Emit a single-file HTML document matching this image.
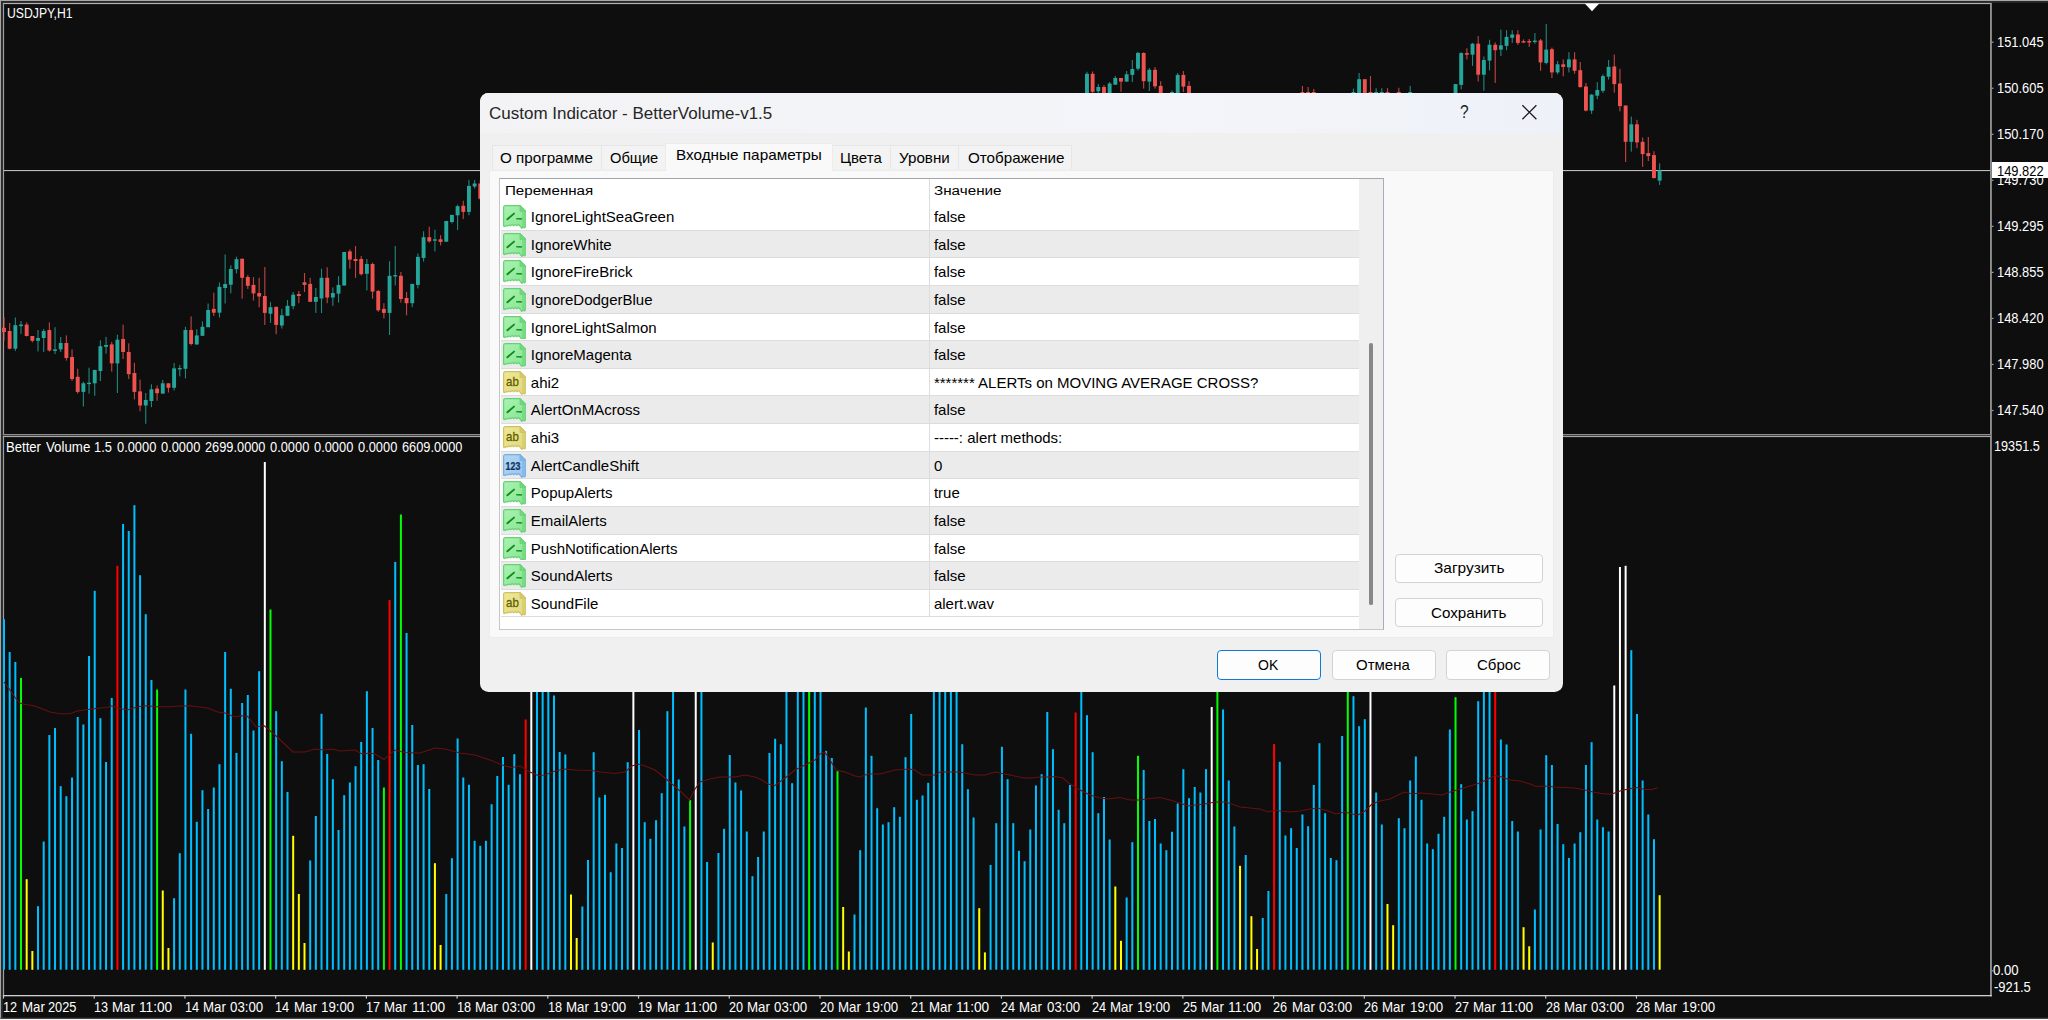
<!DOCTYPE html><html><head><meta charset="utf-8"><title>USDJPY,H1</title><style>
html,body{margin:0;padding:0}
body{width:2048px;height:1020px;overflow:hidden;position:relative;background:#0e0e0e;font-family:"Liberation Sans",sans-serif}
.t{position:absolute;white-space:pre;transform-origin:0 0}
#chart{position:absolute;left:0;top:0}
#dlg{position:absolute;left:480px;top:92.7px;width:1082.7px;height:599px;background:#f0f0f0;border-radius:8.5px;overflow:hidden}
#dlg .a{position:absolute}
.tab{position:absolute;top:52.8px;height:24px;background:#f3f3f3;border:1px solid #e6e6e6;border-bottom:none;box-sizing:border-box}
.btn{position:absolute;box-sizing:border-box;background:#fdfdfd;border:1px solid #d3d3d3;border-radius:4px}
.row{position:absolute;left:21px;width:857.5px;height:27.63px;box-sizing:border-box;border-bottom:1px solid #dcdcdc}

</style></head><body>
<svg id="chart" width="2048" height="1020" viewBox="0 0 2048 1020">
<rect x="0" y="0" width="2048" height="1" fill="#a8a8a8"/>
<rect x="0" y="1" width="2048" height="1.8" fill="#2b2b2b"/>
<rect x="0" y="0" width="1" height="1019" fill="#a4a4a4"/>
<rect x="1" y="1" width="1.8" height="1017" fill="#2b2b2b"/>
<rect x="0" y="1018.8" width="2048" height="1.2" fill="#f4f4f4"/>
<rect x="0" y="1017.8" width="2048" height="1" fill="#4a4a4a"/>
<rect x="2.9" y="2.9" width="1988.6" height="1.2" fill="#b4b4b4"/>
<rect x="2.9" y="2.9" width="1.2" height="993.4" fill="#a0a0a0"/>
<rect x="1990" y="2.9" width="1.9" height="993.4" fill="#8e8e8e"/>
<rect x="2.9" y="995" width="1989" height="1.3" fill="#d0d0d0"/>
<rect x="2.9" y="434" width="1988" height="1.1" fill="#8e8e8e"/>
<rect x="2.9" y="435.1" width="1988" height="0.9" fill="#484848"/>
<rect x="2.9" y="436" width="1988" height="1.1" fill="#a8a8a8"/>
<rect x="4" y="170" width="1986" height="1.1" fill="#bcbcbc"/>
<path d="M1584.8 3.5 L1599.2 3.5 L1592 11.2 Z" fill="#fff"/>
<rect x="1991.5" y="41.60" width="2" height="1.2" fill="#a0a0a0"/>
<rect x="1991.5" y="87.64" width="2" height="1.2" fill="#a0a0a0"/>
<rect x="1991.5" y="133.68" width="2" height="1.2" fill="#a0a0a0"/>
<rect x="1991.5" y="179.72" width="2" height="1.2" fill="#a0a0a0"/>
<rect x="1991.5" y="225.76" width="2" height="1.2" fill="#a0a0a0"/>
<rect x="1991.5" y="271.80" width="2" height="1.2" fill="#a0a0a0"/>
<rect x="1991.5" y="317.84" width="2" height="1.2" fill="#a0a0a0"/>
<rect x="1991.5" y="363.88" width="2" height="1.2" fill="#a0a0a0"/>
<rect x="1991.5" y="409.92" width="2" height="1.2" fill="#a0a0a0"/>
<rect x="1991.5" y="970.20" width="1.6" height="1.2" fill="#a0a0a0"/>
<rect x="2.90" y="996" width="1.2" height="2.6" fill="#c8c8c8"/>
<rect x="93.62" y="996" width="1.2" height="2.6" fill="#c8c8c8"/>
<rect x="184.34" y="996" width="1.2" height="2.6" fill="#c8c8c8"/>
<rect x="275.06" y="996" width="1.2" height="2.6" fill="#c8c8c8"/>
<rect x="365.78" y="996" width="1.2" height="2.6" fill="#c8c8c8"/>
<rect x="456.50" y="996" width="1.2" height="2.6" fill="#c8c8c8"/>
<rect x="547.22" y="996" width="1.2" height="2.6" fill="#c8c8c8"/>
<rect x="637.94" y="996" width="1.2" height="2.6" fill="#c8c8c8"/>
<rect x="728.66" y="996" width="1.2" height="2.6" fill="#c8c8c8"/>
<rect x="819.38" y="996" width="1.2" height="2.6" fill="#c8c8c8"/>
<rect x="910.10" y="996" width="1.2" height="2.6" fill="#c8c8c8"/>
<rect x="1000.82" y="996" width="1.2" height="2.6" fill="#c8c8c8"/>
<rect x="1091.54" y="996" width="1.2" height="2.6" fill="#c8c8c8"/>
<rect x="1182.26" y="996" width="1.2" height="2.6" fill="#c8c8c8"/>
<rect x="1272.98" y="996" width="1.2" height="2.6" fill="#c8c8c8"/>
<rect x="1363.70" y="996" width="1.2" height="2.6" fill="#c8c8c8"/>
<rect x="1454.42" y="996" width="1.2" height="2.6" fill="#c8c8c8"/>
<rect x="1545.14" y="996" width="1.2" height="2.6" fill="#c8c8c8"/>
<rect x="1635.86" y="996" width="1.2" height="2.6" fill="#c8c8c8"/>
<g>
<rect x="3.45" y="317.0" width="1.1" height="23.8" fill="#ef5350" opacity=".8"/>
<rect x="2.05" y="327.8" width="3.9" height="4.2" fill="#ef5350"/>
<rect x="9.12" y="323.0" width="1.1" height="26.4" fill="#ef5350" opacity=".8"/>
<rect x="7.72" y="331.0" width="3.9" height="17.7" fill="#ef5350"/>
<rect x="14.79" y="317.5" width="1.1" height="33.5" fill="#26a69a" opacity=".8"/>
<rect x="13.39" y="325.2" width="3.9" height="23.5" fill="#26a69a"/>
<rect x="20.46" y="321.0" width="1.1" height="12.9" fill="#26a69a" opacity=".8"/>
<rect x="19.06" y="324.6" width="3.9" height="1.5" fill="#26a69a"/>
<rect x="26.13" y="322.4" width="1.1" height="14.1" fill="#ef5350" opacity=".8"/>
<rect x="24.73" y="324.6" width="3.9" height="11.4" fill="#ef5350"/>
<rect x="31.80" y="336.0" width="1.1" height="6.3" fill="#ef5350" opacity=".8"/>
<rect x="30.40" y="336.0" width="3.9" height="4.8" fill="#ef5350"/>
<rect x="37.47" y="330.0" width="1.1" height="21.5" fill="#26a69a" opacity=".8"/>
<rect x="36.07" y="338.0" width="3.9" height="2.8" fill="#26a69a"/>
<rect x="43.14" y="329.0" width="1.1" height="23.0" fill="#26a69a" opacity=".8"/>
<rect x="41.74" y="331.0" width="3.9" height="7.0" fill="#26a69a"/>
<rect x="48.81" y="322.4" width="1.1" height="29.1" fill="#ef5350" opacity=".8"/>
<rect x="47.41" y="330.0" width="3.9" height="20.5" fill="#ef5350"/>
<rect x="54.48" y="327.2" width="1.1" height="26.8" fill="#26a69a" opacity=".8"/>
<rect x="53.08" y="349.4" width="3.9" height="1.5" fill="#26a69a"/>
<rect x="60.15" y="336.9" width="1.1" height="15.1" fill="#26a69a" opacity=".8"/>
<rect x="58.75" y="343.0" width="3.9" height="6.4" fill="#26a69a"/>
<rect x="65.82" y="335.4" width="1.1" height="25.2" fill="#ef5350" opacity=".8"/>
<rect x="64.42" y="343.0" width="3.9" height="15.0" fill="#ef5350"/>
<rect x="71.49" y="349.4" width="1.1" height="31.6" fill="#ef5350" opacity=".8"/>
<rect x="70.09" y="357.0" width="3.9" height="22.0" fill="#ef5350"/>
<rect x="77.16" y="368.8" width="1.1" height="24.8" fill="#ef5350" opacity=".8"/>
<rect x="75.76" y="376.8" width="3.9" height="15.1" fill="#ef5350"/>
<rect x="82.83" y="381.7" width="1.1" height="24.8" fill="#26a69a" opacity=".8"/>
<rect x="81.43" y="383.3" width="3.9" height="8.6" fill="#26a69a"/>
<rect x="88.50" y="367.7" width="1.1" height="25.9" fill="#26a69a" opacity=".8"/>
<rect x="87.10" y="382.7" width="3.9" height="1.4" fill="#26a69a"/>
<rect x="94.17" y="369.9" width="1.1" height="25.9" fill="#26a69a" opacity=".8"/>
<rect x="92.77" y="369.9" width="3.9" height="13.4" fill="#26a69a"/>
<rect x="99.84" y="340.3" width="1.1" height="40.7" fill="#26a69a" opacity=".8"/>
<rect x="98.44" y="346.2" width="3.9" height="24.8" fill="#26a69a"/>
<rect x="105.51" y="336.9" width="1.1" height="16.8" fill="#26a69a" opacity=".8"/>
<rect x="104.11" y="345.0" width="3.9" height="1.8" fill="#26a69a"/>
<rect x="111.18" y="341.8" width="1.1" height="29.8" fill="#ef5350" opacity=".8"/>
<rect x="109.78" y="344.4" width="3.9" height="19.0" fill="#ef5350"/>
<rect x="116.85" y="334.7" width="1.1" height="58.3" fill="#26a69a" opacity=".8"/>
<rect x="115.45" y="339.7" width="3.9" height="23.7" fill="#26a69a"/>
<rect x="122.52" y="324.6" width="1.1" height="34.4" fill="#ef5350" opacity=".8"/>
<rect x="121.12" y="339.0" width="3.9" height="13.0" fill="#ef5350"/>
<rect x="128.19" y="343.4" width="1.1" height="35.6" fill="#ef5350" opacity=".8"/>
<rect x="126.79" y="352.0" width="3.9" height="22.2" fill="#ef5350"/>
<rect x="133.86" y="362.8" width="1.1" height="36.6" fill="#ef5350" opacity=".8"/>
<rect x="132.46" y="373.0" width="3.9" height="18.9" fill="#ef5350"/>
<rect x="139.53" y="379.6" width="1.1" height="31.7" fill="#ef5350" opacity=".8"/>
<rect x="138.13" y="391.4" width="3.9" height="14.1" fill="#ef5350"/>
<rect x="145.20" y="393.0" width="1.1" height="30.8" fill="#26a69a" opacity=".8"/>
<rect x="143.80" y="400.0" width="3.9" height="5.5" fill="#26a69a"/>
<rect x="150.87" y="384.3" width="1.1" height="22.9" fill="#26a69a" opacity=".8"/>
<rect x="149.47" y="389.3" width="3.9" height="11.7" fill="#26a69a"/>
<rect x="156.54" y="385.4" width="1.1" height="15.3" fill="#ef5350" opacity=".8"/>
<rect x="155.14" y="388.6" width="3.9" height="4.6" fill="#ef5350"/>
<rect x="162.21" y="380.0" width="1.1" height="13.6" fill="#26a69a" opacity=".8"/>
<rect x="160.81" y="383.3" width="3.9" height="10.3" fill="#26a69a"/>
<rect x="167.88" y="383.3" width="1.1" height="9.2" fill="#ef5350" opacity=".8"/>
<rect x="166.48" y="383.3" width="3.9" height="4.5" fill="#ef5350"/>
<rect x="173.55" y="363.0" width="1.1" height="27.4" fill="#26a69a" opacity=".8"/>
<rect x="172.15" y="368.4" width="3.9" height="19.4" fill="#26a69a"/>
<rect x="179.22" y="365.0" width="1.1" height="11.4" fill="#26a69a" opacity=".8"/>
<rect x="177.82" y="368.0" width="3.9" height="1.4" fill="#26a69a"/>
<rect x="184.89" y="326.8" width="1.1" height="51.7" fill="#26a69a" opacity=".8"/>
<rect x="183.49" y="330.0" width="3.9" height="38.8" fill="#26a69a"/>
<rect x="190.56" y="316.4" width="1.1" height="29.1" fill="#ef5350" opacity=".8"/>
<rect x="189.16" y="330.0" width="3.9" height="14.0" fill="#ef5350"/>
<rect x="196.23" y="329.3" width="1.1" height="15.7" fill="#26a69a" opacity=".8"/>
<rect x="194.83" y="335.4" width="3.9" height="9.0" fill="#26a69a"/>
<rect x="201.90" y="321.4" width="1.1" height="14.4" fill="#26a69a" opacity=".8"/>
<rect x="200.50" y="326.8" width="3.9" height="9.0" fill="#26a69a"/>
<rect x="207.57" y="303.5" width="1.1" height="23.7" fill="#26a69a" opacity=".8"/>
<rect x="206.17" y="310.0" width="3.9" height="17.2" fill="#26a69a"/>
<rect x="213.24" y="292.7" width="1.1" height="23.3" fill="#ef5350" opacity=".8"/>
<rect x="211.84" y="308.9" width="3.9" height="3.8" fill="#ef5350"/>
<rect x="218.91" y="282.5" width="1.1" height="35.0" fill="#26a69a" opacity=".8"/>
<rect x="217.51" y="286.9" width="3.9" height="25.8" fill="#26a69a"/>
<rect x="224.58" y="254.5" width="1.1" height="49.0" fill="#26a69a" opacity=".8"/>
<rect x="223.18" y="284.0" width="3.9" height="4.0" fill="#26a69a"/>
<rect x="230.25" y="265.3" width="1.1" height="28.0" fill="#26a69a" opacity=".8"/>
<rect x="228.85" y="269.0" width="3.9" height="15.7" fill="#26a69a"/>
<rect x="235.92" y="256.7" width="1.1" height="16.8" fill="#26a69a" opacity=".8"/>
<rect x="234.52" y="259.2" width="3.9" height="10.0" fill="#26a69a"/>
<rect x="241.59" y="258.4" width="1.1" height="40.3" fill="#ef5350" opacity=".8"/>
<rect x="240.19" y="258.8" width="3.9" height="19.0" fill="#ef5350"/>
<rect x="247.26" y="275.0" width="1.1" height="14.0" fill="#ef5350" opacity=".8"/>
<rect x="245.86" y="277.0" width="3.9" height="8.8" fill="#ef5350"/>
<rect x="252.93" y="277.2" width="1.1" height="23.3" fill="#ef5350" opacity=".8"/>
<rect x="251.53" y="284.9" width="3.9" height="8.5" fill="#ef5350"/>
<rect x="258.60" y="277.8" width="1.1" height="29.4" fill="#ef5350" opacity=".8"/>
<rect x="257.20" y="293.0" width="3.9" height="3.5" fill="#ef5350"/>
<rect x="264.27" y="267.0" width="1.1" height="58.0" fill="#ef5350" opacity=".8"/>
<rect x="262.87" y="296.0" width="3.9" height="16.9" fill="#ef5350"/>
<rect x="269.94" y="302.2" width="1.1" height="20.7" fill="#26a69a" opacity=".8"/>
<rect x="268.54" y="307.2" width="3.9" height="6.5" fill="#26a69a"/>
<rect x="275.61" y="306.8" width="1.1" height="27.4" fill="#ef5350" opacity=".8"/>
<rect x="274.21" y="306.8" width="3.9" height="18.1" fill="#ef5350"/>
<rect x="281.28" y="308.7" width="1.1" height="19.8" fill="#26a69a" opacity=".8"/>
<rect x="279.88" y="315.3" width="3.9" height="10.2" fill="#26a69a"/>
<rect x="286.95" y="300.0" width="1.1" height="15.8" fill="#26a69a" opacity=".8"/>
<rect x="285.55" y="305.8" width="3.9" height="10.0" fill="#26a69a"/>
<rect x="292.62" y="292.0" width="1.1" height="17.3" fill="#26a69a" opacity=".8"/>
<rect x="291.22" y="294.7" width="3.9" height="11.5" fill="#26a69a"/>
<rect x="298.29" y="291.0" width="1.1" height="12.2" fill="#ef5350" opacity=".8"/>
<rect x="296.89" y="294.0" width="3.9" height="2.0" fill="#ef5350"/>
<rect x="303.96" y="273.0" width="1.1" height="19.0" fill="#ef5350" opacity=".8"/>
<rect x="302.56" y="282.3" width="3.9" height="2.6" fill="#ef5350"/>
<rect x="309.63" y="277.8" width="1.1" height="24.0" fill="#ef5350" opacity=".8"/>
<rect x="308.23" y="283.9" width="3.9" height="17.9" fill="#ef5350"/>
<rect x="315.30" y="288.0" width="1.1" height="25.0" fill="#26a69a" opacity=".8"/>
<rect x="313.90" y="297.0" width="3.9" height="4.8" fill="#26a69a"/>
<rect x="320.97" y="268.7" width="1.1" height="44.3" fill="#26a69a" opacity=".8"/>
<rect x="319.57" y="277.8" width="3.9" height="20.7" fill="#26a69a"/>
<rect x="326.64" y="267.3" width="1.1" height="35.9" fill="#ef5350" opacity=".8"/>
<rect x="325.24" y="277.8" width="3.9" height="19.7" fill="#ef5350"/>
<rect x="332.31" y="287.4" width="1.1" height="18.4" fill="#26a69a" opacity=".8"/>
<rect x="330.91" y="293.0" width="3.9" height="4.5" fill="#26a69a"/>
<rect x="337.98" y="276.2" width="1.1" height="26.4" fill="#26a69a" opacity=".8"/>
<rect x="336.58" y="284.9" width="3.9" height="8.7" fill="#26a69a"/>
<rect x="343.65" y="252.0" width="1.1" height="33.5" fill="#26a69a" opacity=".8"/>
<rect x="342.25" y="252.0" width="3.9" height="33.5" fill="#26a69a"/>
<rect x="349.32" y="249.4" width="1.1" height="19.3" fill="#ef5350" opacity=".8"/>
<rect x="347.92" y="251.4" width="3.9" height="8.2" fill="#ef5350"/>
<rect x="354.99" y="246.0" width="1.1" height="31.8" fill="#ef5350" opacity=".8"/>
<rect x="353.59" y="259.0" width="3.9" height="2.0" fill="#ef5350"/>
<rect x="360.66" y="256.0" width="1.1" height="19.4" fill="#ef5350" opacity=".8"/>
<rect x="359.26" y="259.0" width="3.9" height="15.2" fill="#ef5350"/>
<rect x="366.33" y="259.0" width="1.1" height="31.4" fill="#26a69a" opacity=".8"/>
<rect x="364.93" y="264.0" width="3.9" height="9.8" fill="#26a69a"/>
<rect x="372.00" y="262.6" width="1.1" height="36.1" fill="#ef5350" opacity=".8"/>
<rect x="370.60" y="264.0" width="3.9" height="27.6" fill="#ef5350"/>
<rect x="377.67" y="290.0" width="1.1" height="21.7" fill="#ef5350" opacity=".8"/>
<rect x="376.27" y="291.0" width="3.9" height="19.3" fill="#ef5350"/>
<rect x="383.34" y="303.2" width="1.1" height="15.2" fill="#ef5350" opacity=".8"/>
<rect x="381.94" y="308.9" width="3.9" height="4.0" fill="#ef5350"/>
<rect x="389.01" y="261.2" width="1.1" height="73.8" fill="#26a69a" opacity=".8"/>
<rect x="387.61" y="275.8" width="3.9" height="37.1" fill="#26a69a"/>
<rect x="394.68" y="246.0" width="1.1" height="39.5" fill="#26a69a" opacity=".8"/>
<rect x="393.28" y="275.1" width="3.9" height="1.4" fill="#26a69a"/>
<rect x="400.35" y="272.0" width="1.1" height="30.6" fill="#ef5350" opacity=".8"/>
<rect x="398.95" y="275.8" width="3.9" height="23.2" fill="#ef5350"/>
<rect x="406.02" y="292.0" width="1.1" height="23.3" fill="#ef5350" opacity=".8"/>
<rect x="404.62" y="298.0" width="3.9" height="5.2" fill="#ef5350"/>
<rect x="411.69" y="283.9" width="1.1" height="23.3" fill="#26a69a" opacity=".8"/>
<rect x="410.29" y="283.9" width="3.9" height="19.3" fill="#26a69a"/>
<rect x="417.36" y="253.5" width="1.1" height="34.9" fill="#26a69a" opacity=".8"/>
<rect x="415.96" y="256.9" width="3.9" height="28.0" fill="#26a69a"/>
<rect x="423.03" y="231.2" width="1.1" height="30.4" fill="#26a69a" opacity=".8"/>
<rect x="421.63" y="237.2" width="3.9" height="20.7" fill="#26a69a"/>
<rect x="428.70" y="226.7" width="1.1" height="16.0" fill="#ef5350" opacity=".8"/>
<rect x="427.30" y="237.2" width="3.9" height="4.1" fill="#ef5350"/>
<rect x="434.37" y="229.7" width="1.1" height="21.7" fill="#26a69a" opacity=".8"/>
<rect x="432.97" y="239.3" width="3.9" height="1.4" fill="#26a69a"/>
<rect x="440.04" y="235.2" width="1.1" height="10.2" fill="#ef5350" opacity=".8"/>
<rect x="438.64" y="239.3" width="3.9" height="2.6" fill="#ef5350"/>
<rect x="445.71" y="221.0" width="1.1" height="20.7" fill="#26a69a" opacity=".8"/>
<rect x="444.31" y="221.0" width="3.9" height="20.7" fill="#26a69a"/>
<rect x="451.38" y="214.9" width="1.1" height="8.5" fill="#26a69a" opacity=".8"/>
<rect x="449.98" y="214.9" width="3.9" height="7.1" fill="#26a69a"/>
<rect x="457.05" y="204.8" width="1.1" height="25.3" fill="#26a69a" opacity=".8"/>
<rect x="455.65" y="206.2" width="3.9" height="9.1" fill="#26a69a"/>
<rect x="462.72" y="200.7" width="1.1" height="18.3" fill="#ef5350" opacity=".8"/>
<rect x="461.32" y="205.8" width="3.9" height="6.1" fill="#ef5350"/>
<rect x="468.39" y="179.8" width="1.1" height="35.5" fill="#26a69a" opacity=".8"/>
<rect x="466.99" y="185.9" width="3.9" height="26.0" fill="#26a69a"/>
<rect x="474.06" y="180.0" width="1.1" height="8.5" fill="#26a69a" opacity=".8"/>
<rect x="472.66" y="183.5" width="3.9" height="3.0" fill="#26a69a"/>
<rect x="479.73" y="180.0" width="1.1" height="20.0" fill="#ef5350" opacity=".8"/>
<rect x="478.33" y="183.5" width="3.9" height="15.2" fill="#ef5350"/>
<rect x="1086.42" y="71.8" width="1.1" height="23.2" fill="#26a69a" opacity=".8"/>
<rect x="1085.02" y="73.8" width="3.9" height="21.2" fill="#26a69a"/>
<rect x="1092.09" y="71.4" width="1.1" height="21.6" fill="#ef5350" opacity=".8"/>
<rect x="1090.69" y="73.8" width="3.9" height="18.0" fill="#ef5350"/>
<rect x="1097.76" y="83.9" width="1.1" height="9.1" fill="#26a69a" opacity=".8"/>
<rect x="1096.36" y="87.0" width="3.9" height="4.3" fill="#26a69a"/>
<rect x="1103.43" y="85.0" width="1.1" height="10.0" fill="#ef5350" opacity=".8"/>
<rect x="1102.03" y="87.0" width="3.9" height="8.0" fill="#ef5350"/>
<rect x="1109.10" y="82.0" width="1.1" height="13.0" fill="#26a69a" opacity=".8"/>
<rect x="1107.70" y="83.5" width="3.9" height="11.5" fill="#26a69a"/>
<rect x="1114.77" y="76.0" width="1.1" height="8.7" fill="#26a69a" opacity=".8"/>
<rect x="1113.37" y="78.0" width="3.9" height="6.7" fill="#26a69a"/>
<rect x="1120.44" y="78.0" width="1.1" height="13.7" fill="#ef5350" opacity=".8"/>
<rect x="1119.04" y="78.0" width="3.9" height="3.6" fill="#ef5350"/>
<rect x="1126.11" y="71.0" width="1.1" height="10.6" fill="#26a69a" opacity=".8"/>
<rect x="1124.71" y="74.3" width="3.9" height="7.3" fill="#26a69a"/>
<rect x="1131.78" y="60.0" width="1.1" height="22.0" fill="#26a69a" opacity=".8"/>
<rect x="1130.38" y="69.0" width="3.9" height="5.9" fill="#26a69a"/>
<rect x="1137.45" y="51.9" width="1.1" height="18.7" fill="#26a69a" opacity=".8"/>
<rect x="1136.05" y="52.9" width="3.9" height="15.8" fill="#26a69a"/>
<rect x="1143.12" y="52.3" width="1.1" height="36.3" fill="#ef5350" opacity=".8"/>
<rect x="1141.72" y="53.0" width="3.9" height="28.2" fill="#ef5350"/>
<rect x="1148.79" y="68.0" width="1.1" height="23.0" fill="#26a69a" opacity=".8"/>
<rect x="1147.39" y="69.8" width="3.9" height="11.8" fill="#26a69a"/>
<rect x="1154.46" y="67.0" width="1.1" height="21.6" fill="#ef5350" opacity=".8"/>
<rect x="1153.06" y="69.8" width="3.9" height="16.5" fill="#ef5350"/>
<rect x="1160.13" y="81.2" width="1.1" height="13.8" fill="#ef5350" opacity=".8"/>
<rect x="1158.73" y="85.9" width="3.9" height="9.1" fill="#ef5350"/>
<rect x="1171.47" y="90.5" width="1.1" height="4.5" fill="#26a69a" opacity=".8"/>
<rect x="1170.07" y="92.0" width="3.9" height="3.0" fill="#26a69a"/>
<rect x="1177.14" y="73.0" width="1.1" height="22.0" fill="#26a69a" opacity=".8"/>
<rect x="1175.74" y="74.9" width="3.9" height="20.1" fill="#26a69a"/>
<rect x="1182.81" y="71.0" width="1.1" height="21.0" fill="#ef5350" opacity=".8"/>
<rect x="1181.41" y="74.9" width="3.9" height="11.7" fill="#ef5350"/>
<rect x="1188.48" y="81.2" width="1.1" height="13.8" fill="#ef5350" opacity=".8"/>
<rect x="1187.08" y="85.9" width="3.9" height="9.1" fill="#ef5350"/>
<rect x="1301.88" y="85.9" width="1.1" height="9.1" fill="#ef5350" opacity=".8"/>
<rect x="1300.48" y="92.0" width="3.9" height="3.0" fill="#ef5350"/>
<rect x="1307.55" y="87.0" width="1.1" height="8.0" fill="#ef5350" opacity=".8"/>
<rect x="1306.15" y="92.0" width="3.9" height="3.0" fill="#ef5350"/>
<rect x="1313.22" y="89.0" width="1.1" height="6.0" fill="#ef5350" opacity=".8"/>
<rect x="1311.82" y="92.0" width="3.9" height="3.0" fill="#ef5350"/>
<rect x="1352.91" y="88.6" width="1.1" height="6.4" fill="#26a69a" opacity=".8"/>
<rect x="1351.51" y="92.0" width="3.9" height="3.0" fill="#26a69a"/>
<rect x="1358.58" y="73.0" width="1.1" height="22.0" fill="#26a69a" opacity=".8"/>
<rect x="1357.18" y="79.2" width="3.9" height="15.8" fill="#26a69a"/>
<rect x="1364.25" y="79.2" width="1.1" height="15.8" fill="#ef5350" opacity=".8"/>
<rect x="1362.85" y="79.2" width="3.9" height="15.8" fill="#ef5350"/>
<rect x="1369.92" y="76.0" width="1.1" height="19.0" fill="#ef5350" opacity=".8"/>
<rect x="1368.52" y="92.0" width="3.9" height="3.0" fill="#ef5350"/>
<rect x="1375.59" y="88.2" width="1.1" height="6.8" fill="#26a69a" opacity=".8"/>
<rect x="1374.19" y="92.0" width="3.9" height="3.0" fill="#26a69a"/>
<rect x="1381.26" y="88.2" width="1.1" height="6.8" fill="#26a69a" opacity=".8"/>
<rect x="1379.86" y="92.0" width="3.9" height="3.0" fill="#26a69a"/>
<rect x="1386.93" y="88.2" width="1.1" height="6.8" fill="#ef5350" opacity=".8"/>
<rect x="1385.53" y="92.0" width="3.9" height="3.0" fill="#ef5350"/>
<rect x="1398.27" y="87.8" width="1.1" height="7.2" fill="#ef5350" opacity=".8"/>
<rect x="1396.87" y="92.0" width="3.9" height="3.0" fill="#ef5350"/>
<rect x="1409.61" y="85.9" width="1.1" height="9.1" fill="#26a69a" opacity=".8"/>
<rect x="1408.21" y="92.0" width="3.9" height="3.0" fill="#26a69a"/>
<rect x="1454.97" y="84.1" width="1.1" height="15.9" fill="#26a69a" opacity=".8"/>
<rect x="1453.57" y="84.1" width="3.9" height="15.9" fill="#26a69a"/>
<rect x="1460.64" y="52.2" width="1.1" height="37.2" fill="#26a69a" opacity=".8"/>
<rect x="1459.24" y="53.1" width="3.9" height="31.8" fill="#26a69a"/>
<rect x="1466.31" y="48.2" width="1.1" height="11.2" fill="#ef5350" opacity=".8"/>
<rect x="1464.91" y="53.1" width="3.9" height="1.6" fill="#ef5350"/>
<rect x="1471.98" y="42.9" width="1.1" height="23.0" fill="#26a69a" opacity=".8"/>
<rect x="1470.58" y="43.7" width="3.9" height="11.0" fill="#26a69a"/>
<rect x="1477.65" y="36.1" width="1.1" height="45.5" fill="#ef5350" opacity=".8"/>
<rect x="1476.25" y="43.7" width="3.9" height="31.0" fill="#ef5350"/>
<rect x="1483.32" y="56.5" width="1.1" height="34.3" fill="#26a69a" opacity=".8"/>
<rect x="1481.92" y="60.0" width="3.9" height="14.7" fill="#26a69a"/>
<rect x="1488.99" y="39.8" width="1.1" height="30.6" fill="#26a69a" opacity=".8"/>
<rect x="1487.59" y="44.7" width="3.9" height="15.9" fill="#26a69a"/>
<rect x="1494.66" y="42.4" width="1.1" height="40.5" fill="#ef5350" opacity=".8"/>
<rect x="1493.26" y="44.7" width="3.9" height="5.5" fill="#ef5350"/>
<rect x="1500.33" y="29.6" width="1.1" height="26.4" fill="#26a69a" opacity=".8"/>
<rect x="1498.93" y="45.3" width="3.9" height="4.3" fill="#26a69a"/>
<rect x="1506.00" y="30.2" width="1.1" height="20.0" fill="#26a69a" opacity=".8"/>
<rect x="1504.60" y="36.9" width="3.9" height="9.0" fill="#26a69a"/>
<rect x="1511.67" y="30.2" width="1.1" height="12.7" fill="#26a69a" opacity=".8"/>
<rect x="1510.27" y="34.5" width="3.9" height="3.3" fill="#26a69a"/>
<rect x="1517.34" y="30.2" width="1.1" height="14.7" fill="#ef5350" opacity=".8"/>
<rect x="1515.94" y="34.5" width="3.9" height="8.4" fill="#ef5350"/>
<rect x="1523.01" y="39.4" width="1.1" height="3.5" fill="#ef5350" opacity=".8"/>
<rect x="1521.61" y="41.2" width="3.9" height="1.4" fill="#ef5350"/>
<rect x="1528.68" y="39.0" width="1.1" height="7.9" fill="#ef5350" opacity=".8"/>
<rect x="1527.28" y="41.0" width="3.9" height="1.4" fill="#ef5350"/>
<rect x="1534.35" y="33.1" width="1.1" height="10.6" fill="#26a69a" opacity=".8"/>
<rect x="1532.95" y="40.6" width="3.9" height="1.4" fill="#26a69a"/>
<rect x="1540.02" y="39.0" width="1.1" height="31.8" fill="#ef5350" opacity=".8"/>
<rect x="1538.62" y="40.4" width="3.9" height="22.0" fill="#ef5350"/>
<rect x="1545.69" y="24.1" width="1.1" height="40.2" fill="#26a69a" opacity=".8"/>
<rect x="1544.29" y="49.6" width="3.9" height="13.3" fill="#26a69a"/>
<rect x="1551.36" y="47.6" width="1.1" height="30.4" fill="#ef5350" opacity=".8"/>
<rect x="1549.96" y="49.2" width="3.9" height="23.2" fill="#ef5350"/>
<rect x="1557.03" y="61.0" width="1.1" height="13.3" fill="#26a69a" opacity=".8"/>
<rect x="1555.63" y="64.3" width="3.9" height="8.1" fill="#26a69a"/>
<rect x="1562.70" y="59.4" width="1.1" height="16.9" fill="#ef5350" opacity=".8"/>
<rect x="1561.30" y="64.3" width="3.9" height="2.6" fill="#ef5350"/>
<rect x="1568.37" y="52.2" width="1.1" height="20.2" fill="#26a69a" opacity=".8"/>
<rect x="1566.97" y="59.4" width="3.9" height="7.9" fill="#26a69a"/>
<rect x="1574.04" y="52.2" width="1.1" height="21.5" fill="#ef5350" opacity=".8"/>
<rect x="1572.64" y="59.4" width="3.9" height="11.4" fill="#ef5350"/>
<rect x="1579.71" y="62.0" width="1.1" height="25.5" fill="#ef5350" opacity=".8"/>
<rect x="1578.31" y="70.2" width="3.9" height="16.9" fill="#ef5350"/>
<rect x="1585.38" y="82.9" width="1.1" height="28.5" fill="#ef5350" opacity=".8"/>
<rect x="1583.98" y="86.5" width="3.9" height="24.1" fill="#ef5350"/>
<rect x="1591.05" y="93.9" width="1.1" height="20.0" fill="#26a69a" opacity=".8"/>
<rect x="1589.65" y="94.7" width="3.9" height="15.9" fill="#26a69a"/>
<rect x="1596.72" y="82.2" width="1.1" height="17.0" fill="#26a69a" opacity=".8"/>
<rect x="1595.32" y="90.0" width="3.9" height="5.7" fill="#26a69a"/>
<rect x="1602.39" y="74.3" width="1.1" height="18.6" fill="#26a69a" opacity=".8"/>
<rect x="1600.99" y="76.1" width="3.9" height="14.7" fill="#26a69a"/>
<rect x="1608.06" y="60.0" width="1.1" height="19.6" fill="#26a69a" opacity=".8"/>
<rect x="1606.66" y="66.9" width="3.9" height="9.8" fill="#26a69a"/>
<rect x="1613.73" y="54.5" width="1.1" height="38.2" fill="#ef5350" opacity=".8"/>
<rect x="1612.33" y="66.5" width="3.9" height="17.6" fill="#ef5350"/>
<rect x="1619.40" y="68.8" width="1.1" height="42.6" fill="#ef5350" opacity=".8"/>
<rect x="1618.00" y="83.5" width="3.9" height="22.6" fill="#ef5350"/>
<rect x="1625.07" y="105.5" width="1.1" height="56.5" fill="#ef5350" opacity=".8"/>
<rect x="1623.67" y="105.5" width="3.9" height="36.3" fill="#ef5350"/>
<rect x="1630.74" y="116.5" width="1.1" height="35.1" fill="#26a69a" opacity=".8"/>
<rect x="1629.34" y="124.3" width="3.9" height="17.5" fill="#26a69a"/>
<rect x="1636.41" y="119.8" width="1.1" height="28.4" fill="#ef5350" opacity=".8"/>
<rect x="1635.01" y="124.3" width="3.9" height="18.1" fill="#ef5350"/>
<rect x="1642.08" y="137.5" width="1.1" height="29.4" fill="#ef5350" opacity=".8"/>
<rect x="1640.68" y="141.8" width="3.9" height="12.3" fill="#ef5350"/>
<rect x="1647.75" y="137.0" width="1.1" height="24.0" fill="#ef5350" opacity=".8"/>
<rect x="1646.35" y="153.1" width="3.9" height="3.0" fill="#ef5350"/>
<rect x="1653.42" y="151.2" width="1.1" height="27.4" fill="#ef5350" opacity=".8"/>
<rect x="1652.02" y="155.1" width="3.9" height="22.9" fill="#ef5350"/>
<rect x="1659.09" y="163.3" width="1.1" height="21.6" fill="#26a69a" opacity=".8"/>
<rect x="1657.69" y="170.4" width="3.9" height="10.2" fill="#26a69a"/>
</g>
<g>
<rect x="3.00" y="619.2" width="2.0" height="350.5" fill="#00bfff"/>
<rect x="8.67" y="652.0" width="2.0" height="317.8" fill="#00bfff"/>
<rect x="14.34" y="662.0" width="2.0" height="307.8" fill="#00bfff"/>
<rect x="20.01" y="678.0" width="2.0" height="291.8" fill="#00ff00"/>
<rect x="25.68" y="879.2" width="2.0" height="90.5" fill="#ffff00"/>
<rect x="31.35" y="951.0" width="2.0" height="18.8" fill="#ffff00"/>
<rect x="37.02" y="906.2" width="2.0" height="63.5" fill="#00bfff"/>
<rect x="42.69" y="841.5" width="2.0" height="128.3" fill="#00bfff"/>
<rect x="48.36" y="735.0" width="2.0" height="234.8" fill="#00bfff"/>
<rect x="54.03" y="728.0" width="2.0" height="241.8" fill="#00bfff"/>
<rect x="59.70" y="786.2" width="2.0" height="183.5" fill="#00bfff"/>
<rect x="65.37" y="796.2" width="2.0" height="173.5" fill="#00bfff"/>
<rect x="71.04" y="777.5" width="2.0" height="192.3" fill="#00bfff"/>
<rect x="76.71" y="717.0" width="2.0" height="252.8" fill="#00bfff"/>
<rect x="82.38" y="724.5" width="2.0" height="245.3" fill="#00bfff"/>
<rect x="88.05" y="656.0" width="2.0" height="313.8" fill="#00bfff"/>
<rect x="93.72" y="590.8" width="2.0" height="379.0" fill="#00bfff"/>
<rect x="99.39" y="718.2" width="2.0" height="251.5" fill="#00bfff"/>
<rect x="105.06" y="762.0" width="2.0" height="207.8" fill="#00bfff"/>
<rect x="110.73" y="698.0" width="2.0" height="271.8" fill="#00bfff"/>
<rect x="116.40" y="565.8" width="2.0" height="404.0" fill="#ff0000"/>
<rect x="122.07" y="524.0" width="2.0" height="445.8" fill="#00bfff"/>
<rect x="127.74" y="531.0" width="2.0" height="438.8" fill="#00bfff"/>
<rect x="133.41" y="505.2" width="2.0" height="464.5" fill="#00bfff"/>
<rect x="139.08" y="575.2" width="2.0" height="394.5" fill="#00bfff"/>
<rect x="144.75" y="614.2" width="2.0" height="355.5" fill="#00bfff"/>
<rect x="150.42" y="680.0" width="2.0" height="289.8" fill="#00bfff"/>
<rect x="156.09" y="689.5" width="2.0" height="280.3" fill="#00ff00"/>
<rect x="161.76" y="890.5" width="2.0" height="79.3" fill="#ffff00"/>
<rect x="167.43" y="948.0" width="2.0" height="21.8" fill="#ffff00"/>
<rect x="173.10" y="898.2" width="2.0" height="71.5" fill="#00bfff"/>
<rect x="178.77" y="853.2" width="2.0" height="116.5" fill="#00bfff"/>
<rect x="184.44" y="689.5" width="2.0" height="280.3" fill="#00bfff"/>
<rect x="190.11" y="733.8" width="2.0" height="236.0" fill="#00bfff"/>
<rect x="195.78" y="821.8" width="2.0" height="148.0" fill="#00bfff"/>
<rect x="201.45" y="790.2" width="2.0" height="179.5" fill="#00bfff"/>
<rect x="207.12" y="809.0" width="2.0" height="160.8" fill="#00bfff"/>
<rect x="212.79" y="787.5" width="2.0" height="182.3" fill="#00bfff"/>
<rect x="218.46" y="764.2" width="2.0" height="205.5" fill="#00bfff"/>
<rect x="224.13" y="652.0" width="2.0" height="317.8" fill="#00bfff"/>
<rect x="229.80" y="688.8" width="2.0" height="281.0" fill="#00bfff"/>
<rect x="235.47" y="753.0" width="2.0" height="216.8" fill="#00bfff"/>
<rect x="241.14" y="703.0" width="2.0" height="266.8" fill="#00bfff"/>
<rect x="246.81" y="695.0" width="2.0" height="274.8" fill="#00bfff"/>
<rect x="252.48" y="730.5" width="2.0" height="239.3" fill="#00bfff"/>
<rect x="258.15" y="671.2" width="2.0" height="298.5" fill="#00bfff"/>
<rect x="263.82" y="462.0" width="2.0" height="507.8" fill="#ffffff"/>
<rect x="269.49" y="609.5" width="2.0" height="360.3" fill="#00ff00"/>
<rect x="275.16" y="711.2" width="2.0" height="258.5" fill="#00bfff"/>
<rect x="280.83" y="761.2" width="2.0" height="208.5" fill="#00bfff"/>
<rect x="286.50" y="792.0" width="2.0" height="177.8" fill="#00bfff"/>
<rect x="292.17" y="835.8" width="2.0" height="134.0" fill="#ffff00"/>
<rect x="297.84" y="894.0" width="2.0" height="75.8" fill="#ffff00"/>
<rect x="303.51" y="943.0" width="2.0" height="26.8" fill="#ffff00"/>
<rect x="309.18" y="860.5" width="2.0" height="109.3" fill="#00bfff"/>
<rect x="314.85" y="816.0" width="2.0" height="153.8" fill="#00bfff"/>
<rect x="320.52" y="713.8" width="2.0" height="256.0" fill="#00bfff"/>
<rect x="326.19" y="754.0" width="2.0" height="215.8" fill="#00bfff"/>
<rect x="331.86" y="779.2" width="2.0" height="190.5" fill="#00bfff"/>
<rect x="337.53" y="830.0" width="2.0" height="139.8" fill="#00bfff"/>
<rect x="343.20" y="795.2" width="2.0" height="174.5" fill="#00bfff"/>
<rect x="348.87" y="782.5" width="2.0" height="187.3" fill="#00bfff"/>
<rect x="354.54" y="766.2" width="2.0" height="203.5" fill="#00bfff"/>
<rect x="360.21" y="742.0" width="2.0" height="227.8" fill="#00bfff"/>
<rect x="365.88" y="691.2" width="2.0" height="278.5" fill="#00bfff"/>
<rect x="371.55" y="728.0" width="2.0" height="241.8" fill="#00bfff"/>
<rect x="377.22" y="760.0" width="2.0" height="209.8" fill="#00bfff"/>
<rect x="382.89" y="787.5" width="2.0" height="182.3" fill="#00ff00"/>
<rect x="388.56" y="600.0" width="2.0" height="369.8" fill="#ff0000"/>
<rect x="394.23" y="562.0" width="2.0" height="407.8" fill="#00bfff"/>
<rect x="399.90" y="514.5" width="2.0" height="455.3" fill="#00ff00"/>
<rect x="405.57" y="633.0" width="2.0" height="336.8" fill="#00bfff"/>
<rect x="411.24" y="725.0" width="2.0" height="244.8" fill="#00bfff"/>
<rect x="416.91" y="765.0" width="2.0" height="204.8" fill="#00bfff"/>
<rect x="422.58" y="764.2" width="2.0" height="205.5" fill="#00bfff"/>
<rect x="428.25" y="789.0" width="2.0" height="180.8" fill="#00bfff"/>
<rect x="433.92" y="863.2" width="2.0" height="106.5" fill="#ffff00"/>
<rect x="439.59" y="945.0" width="2.0" height="24.8" fill="#ffff00"/>
<rect x="445.26" y="894.0" width="2.0" height="75.8" fill="#00bfff"/>
<rect x="450.93" y="858.2" width="2.0" height="111.5" fill="#00bfff"/>
<rect x="456.60" y="738.5" width="2.0" height="231.3" fill="#00bfff"/>
<rect x="462.27" y="777.5" width="2.0" height="192.3" fill="#00bfff"/>
<rect x="467.94" y="784.8" width="2.0" height="185.0" fill="#00bfff"/>
<rect x="473.61" y="840.8" width="2.0" height="129.0" fill="#00bfff"/>
<rect x="479.28" y="845.8" width="2.0" height="124.0" fill="#00bfff"/>
<rect x="484.95" y="840.8" width="2.0" height="129.0" fill="#00bfff"/>
<rect x="490.62" y="804.2" width="2.0" height="165.5" fill="#00bfff"/>
<rect x="496.29" y="776.0" width="2.0" height="193.8" fill="#00bfff"/>
<rect x="501.96" y="757.0" width="2.0" height="212.8" fill="#00bfff"/>
<rect x="507.63" y="784.8" width="2.0" height="185.0" fill="#00bfff"/>
<rect x="513.30" y="754.2" width="2.0" height="215.5" fill="#00bfff"/>
<rect x="518.97" y="774.2" width="2.0" height="195.5" fill="#00bfff"/>
<rect x="524.64" y="719.5" width="2.0" height="250.3" fill="#ff0000"/>
<rect x="530.31" y="680.0" width="2.0" height="289.8" fill="#ffffff"/>
<rect x="535.98" y="680.0" width="2.0" height="289.8" fill="#00bfff"/>
<rect x="541.65" y="680.0" width="2.0" height="289.8" fill="#00bfff"/>
<rect x="547.32" y="680.0" width="2.0" height="289.8" fill="#00bfff"/>
<rect x="552.99" y="695.5" width="2.0" height="274.3" fill="#00bfff"/>
<rect x="558.66" y="752.0" width="2.0" height="217.8" fill="#00bfff"/>
<rect x="564.33" y="754.5" width="2.0" height="215.3" fill="#00bfff"/>
<rect x="570.00" y="894.5" width="2.0" height="75.3" fill="#ffff00"/>
<rect x="575.67" y="938.0" width="2.0" height="31.8" fill="#ffff00"/>
<rect x="581.34" y="906.5" width="2.0" height="63.3" fill="#00bfff"/>
<rect x="587.01" y="860.0" width="2.0" height="109.8" fill="#00bfff"/>
<rect x="592.68" y="752.2" width="2.0" height="217.5" fill="#00bfff"/>
<rect x="598.35" y="797.5" width="2.0" height="172.3" fill="#00bfff"/>
<rect x="604.02" y="794.8" width="2.0" height="175.0" fill="#00bfff"/>
<rect x="609.69" y="872.2" width="2.0" height="97.5" fill="#00bfff"/>
<rect x="615.36" y="843.5" width="2.0" height="126.3" fill="#00bfff"/>
<rect x="621.03" y="848.0" width="2.0" height="121.8" fill="#00bfff"/>
<rect x="626.70" y="762.2" width="2.0" height="207.5" fill="#00bfff"/>
<rect x="632.37" y="680.0" width="2.0" height="289.8" fill="#ffffff"/>
<rect x="638.04" y="730.0" width="2.0" height="239.8" fill="#00bfff"/>
<rect x="643.71" y="822.2" width="2.0" height="147.5" fill="#00bfff"/>
<rect x="649.38" y="838.8" width="2.0" height="131.0" fill="#00bfff"/>
<rect x="655.05" y="820.2" width="2.0" height="149.5" fill="#00bfff"/>
<rect x="660.72" y="793.2" width="2.0" height="176.5" fill="#00bfff"/>
<rect x="666.39" y="711.2" width="2.0" height="258.5" fill="#00bfff"/>
<rect x="672.06" y="680.0" width="2.0" height="289.8" fill="#00bfff"/>
<rect x="677.73" y="779.5" width="2.0" height="190.3" fill="#00bfff"/>
<rect x="683.40" y="826.5" width="2.0" height="143.3" fill="#00bfff"/>
<rect x="689.07" y="800.0" width="2.0" height="169.8" fill="#00ff00"/>
<rect x="694.74" y="680.0" width="2.0" height="289.8" fill="#ffffff"/>
<rect x="700.41" y="680.0" width="2.0" height="289.8" fill="#00bfff"/>
<rect x="706.08" y="862.0" width="2.0" height="107.8" fill="#00bfff"/>
<rect x="711.75" y="942.5" width="2.0" height="27.3" fill="#ffff00"/>
<rect x="717.42" y="853.0" width="2.0" height="116.8" fill="#00bfff"/>
<rect x="723.09" y="828.8" width="2.0" height="141.0" fill="#00bfff"/>
<rect x="728.76" y="755.0" width="2.0" height="214.8" fill="#00bfff"/>
<rect x="734.43" y="782.5" width="2.0" height="187.3" fill="#00bfff"/>
<rect x="740.10" y="790.5" width="2.0" height="179.3" fill="#00bfff"/>
<rect x="745.77" y="831.5" width="2.0" height="138.3" fill="#00bfff"/>
<rect x="751.44" y="876.2" width="2.0" height="93.5" fill="#00bfff"/>
<rect x="757.11" y="857.0" width="2.0" height="112.8" fill="#00bfff"/>
<rect x="762.78" y="831.5" width="2.0" height="138.3" fill="#00bfff"/>
<rect x="768.45" y="753.0" width="2.0" height="216.8" fill="#00bfff"/>
<rect x="774.12" y="738.8" width="2.0" height="231.0" fill="#00bfff"/>
<rect x="779.79" y="744.2" width="2.0" height="225.5" fill="#00bfff"/>
<rect x="785.46" y="680.0" width="2.0" height="289.8" fill="#00bfff"/>
<rect x="791.13" y="783.2" width="2.0" height="186.5" fill="#00bfff"/>
<rect x="796.80" y="680.0" width="2.0" height="289.8" fill="#00bfff"/>
<rect x="802.47" y="680.0" width="2.0" height="289.8" fill="#00bfff"/>
<rect x="808.14" y="680.0" width="2.0" height="289.8" fill="#00ff00"/>
<rect x="813.81" y="680.0" width="2.0" height="289.8" fill="#00bfff"/>
<rect x="819.48" y="680.0" width="2.0" height="289.8" fill="#00bfff"/>
<rect x="825.15" y="750.8" width="2.0" height="219.0" fill="#00bfff"/>
<rect x="830.82" y="758.0" width="2.0" height="211.8" fill="#00bfff"/>
<rect x="836.49" y="771.2" width="2.0" height="198.5" fill="#00ff00"/>
<rect x="842.16" y="907.0" width="2.0" height="62.8" fill="#ffff00"/>
<rect x="847.83" y="951.5" width="2.0" height="18.3" fill="#ffff00"/>
<rect x="853.50" y="914.5" width="2.0" height="55.3" fill="#00bfff"/>
<rect x="859.17" y="850.2" width="2.0" height="119.5" fill="#00bfff"/>
<rect x="864.84" y="707.5" width="2.0" height="262.3" fill="#00bfff"/>
<rect x="870.51" y="755.8" width="2.0" height="214.0" fill="#00bfff"/>
<rect x="876.18" y="808.2" width="2.0" height="161.5" fill="#00bfff"/>
<rect x="881.85" y="824.5" width="2.0" height="145.3" fill="#00bfff"/>
<rect x="887.52" y="822.2" width="2.0" height="147.5" fill="#00bfff"/>
<rect x="893.19" y="807.2" width="2.0" height="162.5" fill="#00bfff"/>
<rect x="898.86" y="816.8" width="2.0" height="153.0" fill="#00bfff"/>
<rect x="904.53" y="757.2" width="2.0" height="212.5" fill="#00bfff"/>
<rect x="910.20" y="714.0" width="2.0" height="255.8" fill="#00bfff"/>
<rect x="915.87" y="799.8" width="2.0" height="170.0" fill="#00bfff"/>
<rect x="921.54" y="795.5" width="2.0" height="174.3" fill="#00bfff"/>
<rect x="927.21" y="782.8" width="2.0" height="187.0" fill="#00bfff"/>
<rect x="932.88" y="680.0" width="2.0" height="289.8" fill="#00bfff"/>
<rect x="938.55" y="680.0" width="2.0" height="289.8" fill="#00bfff"/>
<rect x="944.22" y="680.0" width="2.0" height="289.8" fill="#00bfff"/>
<rect x="949.89" y="680.0" width="2.0" height="289.8" fill="#00bfff"/>
<rect x="955.56" y="680.0" width="2.0" height="289.8" fill="#00bfff"/>
<rect x="961.23" y="744.2" width="2.0" height="225.5" fill="#00bfff"/>
<rect x="966.90" y="789.2" width="2.0" height="180.5" fill="#00bfff"/>
<rect x="972.57" y="817.5" width="2.0" height="152.3" fill="#00bfff"/>
<rect x="978.24" y="908.2" width="2.0" height="61.5" fill="#ffff00"/>
<rect x="983.91" y="952.4" width="2.0" height="17.4" fill="#ffff00"/>
<rect x="989.58" y="865.0" width="2.0" height="104.8" fill="#00bfff"/>
<rect x="995.25" y="823.2" width="2.0" height="146.5" fill="#00bfff"/>
<rect x="1000.92" y="746.8" width="2.0" height="223.0" fill="#00bfff"/>
<rect x="1006.59" y="779.2" width="2.0" height="190.5" fill="#00bfff"/>
<rect x="1012.26" y="823.2" width="2.0" height="146.5" fill="#00bfff"/>
<rect x="1017.93" y="850.8" width="2.0" height="119.0" fill="#00bfff"/>
<rect x="1023.60" y="861.2" width="2.0" height="108.5" fill="#00bfff"/>
<rect x="1029.27" y="829.5" width="2.0" height="140.3" fill="#00bfff"/>
<rect x="1034.94" y="785.5" width="2.0" height="184.3" fill="#00bfff"/>
<rect x="1040.61" y="774.2" width="2.0" height="195.5" fill="#00bfff"/>
<rect x="1046.28" y="712.0" width="2.0" height="257.8" fill="#00bfff"/>
<rect x="1051.95" y="749.2" width="2.0" height="220.5" fill="#00bfff"/>
<rect x="1057.62" y="809.8" width="2.0" height="160.0" fill="#00bfff"/>
<rect x="1063.29" y="823.2" width="2.0" height="146.5" fill="#00bfff"/>
<rect x="1068.96" y="785.0" width="2.0" height="184.8" fill="#00bfff"/>
<rect x="1074.63" y="712.5" width="2.0" height="257.3" fill="#ff0000"/>
<rect x="1080.30" y="680.0" width="2.0" height="289.8" fill="#00bfff"/>
<rect x="1085.97" y="715.2" width="2.0" height="254.5" fill="#00bfff"/>
<rect x="1091.64" y="752.2" width="2.0" height="217.5" fill="#00bfff"/>
<rect x="1097.31" y="813.2" width="2.0" height="156.5" fill="#00bfff"/>
<rect x="1102.98" y="797.0" width="2.0" height="172.8" fill="#00bfff"/>
<rect x="1108.65" y="839.5" width="2.0" height="130.3" fill="#00bfff"/>
<rect x="1114.32" y="886.5" width="2.0" height="83.3" fill="#ffff00"/>
<rect x="1119.99" y="940.8" width="2.0" height="29.0" fill="#ffff00"/>
<rect x="1125.66" y="897.5" width="2.0" height="72.3" fill="#00bfff"/>
<rect x="1131.33" y="842.2" width="2.0" height="127.5" fill="#00bfff"/>
<rect x="1137.00" y="755.8" width="2.0" height="214.0" fill="#00ff00"/>
<rect x="1142.67" y="770.0" width="2.0" height="199.8" fill="#00bfff"/>
<rect x="1148.34" y="821.0" width="2.0" height="148.8" fill="#00bfff"/>
<rect x="1154.01" y="819.0" width="2.0" height="150.8" fill="#00bfff"/>
<rect x="1159.68" y="843.5" width="2.0" height="126.3" fill="#00bfff"/>
<rect x="1165.35" y="850.2" width="2.0" height="119.5" fill="#00bfff"/>
<rect x="1171.02" y="831.8" width="2.0" height="138.0" fill="#00bfff"/>
<rect x="1176.69" y="803.5" width="2.0" height="166.3" fill="#00bfff"/>
<rect x="1182.36" y="769.2" width="2.0" height="200.5" fill="#00bfff"/>
<rect x="1188.03" y="798.2" width="2.0" height="171.5" fill="#00bfff"/>
<rect x="1193.70" y="787.0" width="2.0" height="182.8" fill="#00bfff"/>
<rect x="1199.37" y="792.5" width="2.0" height="177.3" fill="#00bfff"/>
<rect x="1205.04" y="769.2" width="2.0" height="200.5" fill="#00bfff"/>
<rect x="1210.71" y="707.0" width="2.0" height="262.8" fill="#ffffff"/>
<rect x="1216.38" y="680.0" width="2.0" height="289.8" fill="#00ff00"/>
<rect x="1222.05" y="709.5" width="2.0" height="260.3" fill="#00bfff"/>
<rect x="1227.72" y="780.5" width="2.0" height="189.3" fill="#00bfff"/>
<rect x="1233.39" y="826.5" width="2.0" height="143.3" fill="#00bfff"/>
<rect x="1239.06" y="865.8" width="2.0" height="104.0" fill="#ffff00"/>
<rect x="1244.73" y="855.0" width="2.0" height="114.8" fill="#00bfff"/>
<rect x="1250.40" y="916.2" width="2.0" height="53.5" fill="#ffff00"/>
<rect x="1256.07" y="949.0" width="2.0" height="20.8" fill="#ffff00"/>
<rect x="1261.74" y="918.0" width="2.0" height="51.8" fill="#00bfff"/>
<rect x="1267.41" y="891.0" width="2.0" height="78.8" fill="#00bfff"/>
<rect x="1273.08" y="744.0" width="2.0" height="225.8" fill="#ff0000"/>
<rect x="1278.75" y="761.8" width="2.0" height="208.0" fill="#00bfff"/>
<rect x="1284.42" y="835.5" width="2.0" height="134.3" fill="#00bfff"/>
<rect x="1290.09" y="828.2" width="2.0" height="141.5" fill="#00bfff"/>
<rect x="1295.76" y="848.0" width="2.0" height="121.8" fill="#00bfff"/>
<rect x="1301.43" y="814.5" width="2.0" height="155.3" fill="#00bfff"/>
<rect x="1307.10" y="826.2" width="2.0" height="143.5" fill="#00bfff"/>
<rect x="1312.77" y="785.0" width="2.0" height="184.8" fill="#00bfff"/>
<rect x="1318.44" y="743.2" width="2.0" height="226.5" fill="#00bfff"/>
<rect x="1324.11" y="813.2" width="2.0" height="156.5" fill="#00bfff"/>
<rect x="1329.78" y="858.0" width="2.0" height="111.8" fill="#00bfff"/>
<rect x="1335.45" y="860.2" width="2.0" height="109.5" fill="#00bfff"/>
<rect x="1341.12" y="736.0" width="2.0" height="233.8" fill="#00bfff"/>
<rect x="1346.79" y="680.0" width="2.0" height="289.8" fill="#00ff00"/>
<rect x="1352.46" y="696.2" width="2.0" height="273.5" fill="#00bfff"/>
<rect x="1358.13" y="726.2" width="2.0" height="243.5" fill="#00bfff"/>
<rect x="1363.80" y="719.2" width="2.0" height="250.5" fill="#00bfff"/>
<rect x="1369.47" y="680.0" width="2.0" height="289.8" fill="#ffffff"/>
<rect x="1375.14" y="792.5" width="2.0" height="177.3" fill="#00bfff"/>
<rect x="1380.81" y="824.5" width="2.0" height="145.3" fill="#00bfff"/>
<rect x="1386.48" y="904.0" width="2.0" height="65.8" fill="#ffff00"/>
<rect x="1392.15" y="925.2" width="2.0" height="44.5" fill="#ffff00"/>
<rect x="1397.82" y="818.2" width="2.0" height="151.5" fill="#00bfff"/>
<rect x="1403.49" y="828.2" width="2.0" height="141.5" fill="#00bfff"/>
<rect x="1409.16" y="780.5" width="2.0" height="189.3" fill="#00bfff"/>
<rect x="1414.83" y="756.5" width="2.0" height="213.3" fill="#00bfff"/>
<rect x="1420.50" y="799.8" width="2.0" height="170.0" fill="#00bfff"/>
<rect x="1426.17" y="843.5" width="2.0" height="126.3" fill="#00bfff"/>
<rect x="1431.84" y="849.2" width="2.0" height="120.5" fill="#00bfff"/>
<rect x="1437.51" y="833.8" width="2.0" height="136.0" fill="#00bfff"/>
<rect x="1443.18" y="816.8" width="2.0" height="153.0" fill="#00bfff"/>
<rect x="1448.85" y="729.5" width="2.0" height="240.3" fill="#00bfff"/>
<rect x="1454.52" y="697.2" width="2.0" height="272.5" fill="#00ff00"/>
<rect x="1460.19" y="784.2" width="2.0" height="185.5" fill="#00bfff"/>
<rect x="1465.86" y="819.5" width="2.0" height="150.3" fill="#00bfff"/>
<rect x="1471.53" y="811.2" width="2.0" height="158.5" fill="#00bfff"/>
<rect x="1477.20" y="701.2" width="2.0" height="268.5" fill="#00bfff"/>
<rect x="1482.87" y="680.0" width="2.0" height="289.8" fill="#00bfff"/>
<rect x="1488.54" y="680.0" width="2.0" height="289.8" fill="#00bfff"/>
<rect x="1494.21" y="680.0" width="2.0" height="289.8" fill="#ff0000"/>
<rect x="1499.88" y="739.5" width="2.0" height="230.3" fill="#00bfff"/>
<rect x="1505.55" y="744.5" width="2.0" height="225.3" fill="#00bfff"/>
<rect x="1511.22" y="821.0" width="2.0" height="148.8" fill="#00bfff"/>
<rect x="1516.89" y="831.5" width="2.0" height="138.3" fill="#00bfff"/>
<rect x="1522.56" y="927.2" width="2.0" height="42.5" fill="#ffff00"/>
<rect x="1528.23" y="946.3" width="2.0" height="23.5" fill="#ffff00"/>
<rect x="1533.90" y="909.5" width="2.0" height="60.3" fill="#00bfff"/>
<rect x="1539.57" y="829.5" width="2.0" height="140.3" fill="#00bfff"/>
<rect x="1545.24" y="755.2" width="2.0" height="214.5" fill="#00bfff"/>
<rect x="1550.91" y="765.0" width="2.0" height="204.8" fill="#00bfff"/>
<rect x="1556.58" y="824.0" width="2.0" height="145.8" fill="#00bfff"/>
<rect x="1562.25" y="844.2" width="2.0" height="125.5" fill="#00bfff"/>
<rect x="1567.92" y="858.0" width="2.0" height="111.8" fill="#00bfff"/>
<rect x="1573.59" y="843.5" width="2.0" height="126.3" fill="#00bfff"/>
<rect x="1579.26" y="832.2" width="2.0" height="137.5" fill="#00bfff"/>
<rect x="1584.93" y="765.0" width="2.0" height="204.8" fill="#00bfff"/>
<rect x="1590.60" y="742.2" width="2.0" height="227.5" fill="#00bfff"/>
<rect x="1596.27" y="819.5" width="2.0" height="150.3" fill="#00bfff"/>
<rect x="1601.94" y="827.2" width="2.0" height="142.5" fill="#00bfff"/>
<rect x="1607.61" y="831.5" width="2.0" height="138.3" fill="#00bfff"/>
<rect x="1613.28" y="685.5" width="2.0" height="284.3" fill="#ffffff"/>
<rect x="1618.95" y="567.0" width="2.0" height="402.8" fill="#ffffff"/>
<rect x="1624.62" y="565.8" width="2.0" height="404.0" fill="#ffffff"/>
<rect x="1630.29" y="650.2" width="2.0" height="319.5" fill="#00bfff"/>
<rect x="1635.96" y="714.0" width="2.0" height="255.8" fill="#00bfff"/>
<rect x="1641.63" y="780.5" width="2.0" height="189.3" fill="#00bfff"/>
<rect x="1647.30" y="814.5" width="2.0" height="155.3" fill="#00bfff"/>
<rect x="1652.97" y="839.2" width="2.0" height="130.5" fill="#00bfff"/>
<rect x="1658.64" y="895.2" width="2.0" height="74.5" fill="#ffff00"/>
</g>
<polyline points="4,682 10,690 15,697.5 20,703 25,704.5 32.5,705.5 40,708 50,712 60,713.75 70,713.75 77.5,711 87.5,709.5 100,708 107.5,707.5 111,705.75 117.5,708 127.5,710 135,707.5 142.5,706 147.5,705.75 155,706.75 170,706.75 180,706 190,705.75 200,707 207.5,708 217.5,712 225,713 230,715 235,717 241,715.75 247.5,716.25 252.5,722.5 256,727 264,725.5 275,735 293,752 305,752 315,749 325,750 332,749 340,751 355,750 362,754 370,753 375,754 384,759.5 395,750 405,752.5 420,753 435,748 445,749 460,753 475,755 490,760 505,766 512,767.5 520,766 530,772 538,775.5 545,775 555,771 565,769 575,770 592,770.5 600,772 615,773.5 625,772 632,766 638,764 645,766 655,770 665,778 680,791 689.5,800 695,789 700,782 710,779 720,777 735,777 745,775 755,777 762,780 768,784 775,785.5 785,778 795,770 805,765 815,760 820,754 825,752.5 830,760 836,770 845,772 855,776 860,777 868,774 880,774 895,770 910,769 915,770 922,775 935,775 940,772 960,772 975,775 985,775 995,772 1010,775 1024,778 1032,778 1040,777 1050,777 1055,776.5 1063,778 1070,784 1080,790 1090,795 1100,798 1108,799 1120,797.5 1130,800 1140,800 1150,798.5 1160,797.5 1170,800 1180,803 1188,806 1195,805 1205,804 1215,802 1225,802 1232,804 1240,807 1250,808 1260,809 1268,812 1275,810 1280,811 1290,812 1300,811 1310,809 1318,808 1328,811 1336,814 1345,812 1352,814 1358,815 1365,811 1372,804 1380,801 1390,799 1398,795 1405,792 1412,794 1420,793 1432,794 1442,795 1450,792 1460,789 1470,786 1480,783 1488,779 1495,775.5 1502,777 1510,780 1520,781 1530,784 1536,786.5 1545,786 1555,787 1565,787.5 1575,788 1585,790 1595,792.5 1605,794 1612,794 1620,791 1628,789 1637,787.5 1645,789.5 1652,789.5 1658,787.5" fill="none" stroke="#661010" stroke-width="1.1"/>
</svg>
<div class="t" style="left:6.60px;top:6.30px;font-size:14.3px;line-height:14.3px;color:#fff;transform:scaleX(0.8539);">USDJPY,H1</div>
<div class="t" style="left:6.40px;top:440.10px;font-size:14.3px;line-height:14.3px;color:#fff;transform:scaleX(0.9148);">Better</div>
<div class="t" style="left:45.90px;top:440.10px;font-size:14.3px;line-height:14.3px;color:#fff;transform:scaleX(0.9288);">Volume</div>
<div class="t" style="left:94.20px;top:440.10px;font-size:14.3px;line-height:14.3px;color:#fff;transform:scaleX(0.9055);">1.5</div>
<div class="t" style="left:116.80px;top:440.10px;font-size:14.3px;line-height:14.3px;color:#fff;transform:scaleX(0.8985);">0.0000</div>
<div class="t" style="left:160.80px;top:440.10px;font-size:14.3px;line-height:14.3px;color:#fff;transform:scaleX(0.8985);">0.0000</div>
<div class="t" style="left:204.80px;top:440.10px;font-size:14.3px;line-height:14.3px;color:#fff;transform:scaleX(0.8950);">2699.0000</div>
<div class="t" style="left:270.10px;top:440.10px;font-size:14.3px;line-height:14.3px;color:#fff;transform:scaleX(0.8985);">0.0000</div>
<div class="t" style="left:314.10px;top:440.10px;font-size:14.3px;line-height:14.3px;color:#fff;transform:scaleX(0.8985);">0.0000</div>
<div class="t" style="left:358.10px;top:440.10px;font-size:14.3px;line-height:14.3px;color:#fff;transform:scaleX(0.8985);">0.0000</div>
<div class="t" style="left:402.10px;top:440.10px;font-size:14.3px;line-height:14.3px;color:#fff;transform:scaleX(0.8950);">6609.0000</div>
<div class="t" style="left:1997.30px;top:35.10px;font-size:14.3px;line-height:14.3px;color:#fff;transform:scaleX(0.9015);">151.045</div>
<div class="t" style="left:1997.30px;top:81.14px;font-size:14.3px;line-height:14.3px;color:#fff;transform:scaleX(0.9015);">150.605</div>
<div class="t" style="left:1997.30px;top:127.18px;font-size:14.3px;line-height:14.3px;color:#fff;transform:scaleX(0.9015);">150.170</div>
<div class="t" style="left:1997.30px;top:173.22px;font-size:14.3px;line-height:14.3px;color:#fff;transform:scaleX(0.9015);">149.730</div>
<div class="t" style="left:1997.30px;top:219.26px;font-size:14.3px;line-height:14.3px;color:#fff;transform:scaleX(0.9015);">149.295</div>
<div class="t" style="left:1997.30px;top:265.30px;font-size:14.3px;line-height:14.3px;color:#fff;transform:scaleX(0.9015);">148.855</div>
<div class="t" style="left:1997.30px;top:311.34px;font-size:14.3px;line-height:14.3px;color:#fff;transform:scaleX(0.9015);">148.420</div>
<div class="t" style="left:1997.30px;top:357.38px;font-size:14.3px;line-height:14.3px;color:#fff;transform:scaleX(0.9015);">147.980</div>
<div class="t" style="left:1997.30px;top:403.42px;font-size:14.3px;line-height:14.3px;color:#fff;transform:scaleX(0.9015);">147.540</div>
<div style="position:absolute;left:1992px;top:162.1px;width:56px;height:16.4px;background:#fff"></div>
<div class="t" style="left:1997.30px;top:163.70px;font-size:14.3px;line-height:14.3px;color:#000;transform:scaleX(0.9015);">149.822</div>
<div class="t" style="left:1994.40px;top:438.70px;font-size:14.3px;line-height:14.3px;color:#fff;transform:scaleX(0.8860);">19351.5</div>
<div class="t" style="left:1993.10px;top:963.10px;font-size:14.3px;line-height:14.3px;color:#fff;transform:scaleX(0.9198);">0.00</div>
<div class="t" style="left:1993.60px;top:979.90px;font-size:14.3px;line-height:14.3px;color:#fff;transform:scaleX(0.9076);">-921.5</div>
<div class="t" style="left:3.30px;top:999.60px;font-size:14.3px;line-height:14.3px;color:#fff;transform:scaleX(0.8865);">12</div>
<div class="t" style="left:21.50px;top:999.60px;font-size:14.3px;line-height:14.3px;color:#fff;transform:scaleX(0.9299);">Mar</div>
<div class="t" style="left:48.30px;top:999.60px;font-size:14.3px;line-height:14.3px;color:#fff;transform:scaleX(0.8959);">2025</div>
<div class="t" style="left:94.02px;top:999.60px;font-size:14.3px;line-height:14.3px;color:#fff;transform:scaleX(0.8865);">13</div>
<div class="t" style="left:112.22px;top:999.60px;font-size:14.3px;line-height:14.3px;color:#fff;transform:scaleX(0.9299);">Mar</div>
<div class="t" style="left:139.42px;top:999.60px;font-size:14.3px;line-height:14.3px;color:#fff;transform:scaleX(0.9561);">11:00</div>
<div class="t" style="left:184.74px;top:999.60px;font-size:14.3px;line-height:14.3px;color:#fff;transform:scaleX(0.8865);">14</div>
<div class="t" style="left:202.94px;top:999.60px;font-size:14.3px;line-height:14.3px;color:#fff;transform:scaleX(0.9299);">Mar</div>
<div class="t" style="left:230.14px;top:999.60px;font-size:14.3px;line-height:14.3px;color:#fff;transform:scaleX(0.9278);">03:00</div>
<div class="t" style="left:275.46px;top:999.60px;font-size:14.3px;line-height:14.3px;color:#fff;transform:scaleX(0.8865);">14</div>
<div class="t" style="left:293.66px;top:999.60px;font-size:14.3px;line-height:14.3px;color:#fff;transform:scaleX(0.9299);">Mar</div>
<div class="t" style="left:320.86px;top:999.60px;font-size:14.3px;line-height:14.3px;color:#fff;transform:scaleX(0.9278);">19:00</div>
<div class="t" style="left:366.18px;top:999.60px;font-size:14.3px;line-height:14.3px;color:#fff;transform:scaleX(0.8865);">17</div>
<div class="t" style="left:384.38px;top:999.60px;font-size:14.3px;line-height:14.3px;color:#fff;transform:scaleX(0.9299);">Mar</div>
<div class="t" style="left:411.58px;top:999.60px;font-size:14.3px;line-height:14.3px;color:#fff;transform:scaleX(0.9561);">11:00</div>
<div class="t" style="left:456.90px;top:999.60px;font-size:14.3px;line-height:14.3px;color:#fff;transform:scaleX(0.8865);">18</div>
<div class="t" style="left:475.10px;top:999.60px;font-size:14.3px;line-height:14.3px;color:#fff;transform:scaleX(0.9299);">Mar</div>
<div class="t" style="left:502.30px;top:999.60px;font-size:14.3px;line-height:14.3px;color:#fff;transform:scaleX(0.9278);">03:00</div>
<div class="t" style="left:547.62px;top:999.60px;font-size:14.3px;line-height:14.3px;color:#fff;transform:scaleX(0.8865);">18</div>
<div class="t" style="left:565.82px;top:999.60px;font-size:14.3px;line-height:14.3px;color:#fff;transform:scaleX(0.9299);">Mar</div>
<div class="t" style="left:593.02px;top:999.60px;font-size:14.3px;line-height:14.3px;color:#fff;transform:scaleX(0.9278);">19:00</div>
<div class="t" style="left:638.34px;top:999.60px;font-size:14.3px;line-height:14.3px;color:#fff;transform:scaleX(0.8865);">19</div>
<div class="t" style="left:656.54px;top:999.60px;font-size:14.3px;line-height:14.3px;color:#fff;transform:scaleX(0.9299);">Mar</div>
<div class="t" style="left:683.74px;top:999.60px;font-size:14.3px;line-height:14.3px;color:#fff;transform:scaleX(0.9561);">11:00</div>
<div class="t" style="left:729.06px;top:999.60px;font-size:14.3px;line-height:14.3px;color:#fff;transform:scaleX(0.8865);">20</div>
<div class="t" style="left:747.26px;top:999.60px;font-size:14.3px;line-height:14.3px;color:#fff;transform:scaleX(0.9299);">Mar</div>
<div class="t" style="left:774.46px;top:999.60px;font-size:14.3px;line-height:14.3px;color:#fff;transform:scaleX(0.9278);">03:00</div>
<div class="t" style="left:819.78px;top:999.60px;font-size:14.3px;line-height:14.3px;color:#fff;transform:scaleX(0.8865);">20</div>
<div class="t" style="left:837.98px;top:999.60px;font-size:14.3px;line-height:14.3px;color:#fff;transform:scaleX(0.9299);">Mar</div>
<div class="t" style="left:865.18px;top:999.60px;font-size:14.3px;line-height:14.3px;color:#fff;transform:scaleX(0.9278);">19:00</div>
<div class="t" style="left:910.50px;top:999.60px;font-size:14.3px;line-height:14.3px;color:#fff;transform:scaleX(0.8865);">21</div>
<div class="t" style="left:928.70px;top:999.60px;font-size:14.3px;line-height:14.3px;color:#fff;transform:scaleX(0.9299);">Mar</div>
<div class="t" style="left:955.90px;top:999.60px;font-size:14.3px;line-height:14.3px;color:#fff;transform:scaleX(0.9561);">11:00</div>
<div class="t" style="left:1001.22px;top:999.60px;font-size:14.3px;line-height:14.3px;color:#fff;transform:scaleX(0.8865);">24</div>
<div class="t" style="left:1019.42px;top:999.60px;font-size:14.3px;line-height:14.3px;color:#fff;transform:scaleX(0.9299);">Mar</div>
<div class="t" style="left:1046.62px;top:999.60px;font-size:14.3px;line-height:14.3px;color:#fff;transform:scaleX(0.9278);">03:00</div>
<div class="t" style="left:1091.94px;top:999.60px;font-size:14.3px;line-height:14.3px;color:#fff;transform:scaleX(0.8865);">24</div>
<div class="t" style="left:1110.14px;top:999.60px;font-size:14.3px;line-height:14.3px;color:#fff;transform:scaleX(0.9299);">Mar</div>
<div class="t" style="left:1137.34px;top:999.60px;font-size:14.3px;line-height:14.3px;color:#fff;transform:scaleX(0.9278);">19:00</div>
<div class="t" style="left:1182.66px;top:999.60px;font-size:14.3px;line-height:14.3px;color:#fff;transform:scaleX(0.8865);">25</div>
<div class="t" style="left:1200.86px;top:999.60px;font-size:14.3px;line-height:14.3px;color:#fff;transform:scaleX(0.9299);">Mar</div>
<div class="t" style="left:1228.06px;top:999.60px;font-size:14.3px;line-height:14.3px;color:#fff;transform:scaleX(0.9561);">11:00</div>
<div class="t" style="left:1273.38px;top:999.60px;font-size:14.3px;line-height:14.3px;color:#fff;transform:scaleX(0.8865);">26</div>
<div class="t" style="left:1291.58px;top:999.60px;font-size:14.3px;line-height:14.3px;color:#fff;transform:scaleX(0.9299);">Mar</div>
<div class="t" style="left:1318.78px;top:999.60px;font-size:14.3px;line-height:14.3px;color:#fff;transform:scaleX(0.9278);">03:00</div>
<div class="t" style="left:1364.10px;top:999.60px;font-size:14.3px;line-height:14.3px;color:#fff;transform:scaleX(0.8865);">26</div>
<div class="t" style="left:1382.30px;top:999.60px;font-size:14.3px;line-height:14.3px;color:#fff;transform:scaleX(0.9299);">Mar</div>
<div class="t" style="left:1409.50px;top:999.60px;font-size:14.3px;line-height:14.3px;color:#fff;transform:scaleX(0.9278);">19:00</div>
<div class="t" style="left:1454.82px;top:999.60px;font-size:14.3px;line-height:14.3px;color:#fff;transform:scaleX(0.8865);">27</div>
<div class="t" style="left:1473.02px;top:999.60px;font-size:14.3px;line-height:14.3px;color:#fff;transform:scaleX(0.9299);">Mar</div>
<div class="t" style="left:1500.22px;top:999.60px;font-size:14.3px;line-height:14.3px;color:#fff;transform:scaleX(0.9561);">11:00</div>
<div class="t" style="left:1545.54px;top:999.60px;font-size:14.3px;line-height:14.3px;color:#fff;transform:scaleX(0.8865);">28</div>
<div class="t" style="left:1563.74px;top:999.60px;font-size:14.3px;line-height:14.3px;color:#fff;transform:scaleX(0.9299);">Mar</div>
<div class="t" style="left:1590.94px;top:999.60px;font-size:14.3px;line-height:14.3px;color:#fff;transform:scaleX(0.9278);">03:00</div>
<div class="t" style="left:1636.26px;top:999.60px;font-size:14.3px;line-height:14.3px;color:#fff;transform:scaleX(0.8865);">28</div>
<div class="t" style="left:1654.46px;top:999.60px;font-size:14.3px;line-height:14.3px;color:#fff;transform:scaleX(0.9299);">Mar</div>
<div class="t" style="left:1681.66px;top:999.60px;font-size:14.3px;line-height:14.3px;color:#fff;transform:scaleX(0.9278);">19:00</div>
<div id="dlg">
<div class="a" style="left:0.00px;top:0.00px;width:1083.00px;height:40.10px;background:linear-gradient(90deg,#f3f3f5 0%,#f3f4f8 40%,#f4f5fa 65%,#eff2f8 90%,#eef1f8 100%)"></div>
<div class="t" style="left:9.00px;top:11.82px;font-size:16.4px;line-height:16.4px;color:#262626;transform:scaleX(1.0364);">Custom Indicator - BetterVolume-v1.5</div>
<div class="t" style="left:980.20px;top:11.69px;font-size:17.5px;line-height:17.5px;color:#1b1b1b;transform:scaleX(0.8836);">?</div>
<svg class="a" style="left:1040px;top:10.299999999999997px" width="19" height="19" viewBox="0 0 19 19"><path d="M2.4 2.3 L16.4 16.3 M16.4 2.3 L2.4 16.3" stroke="#1b1b1b" stroke-width="1.25" fill="none"/></svg>
<div class="a" style="left:8.60px;top:76.90px;width:1065.20px;height:468.60px;background:#f9f9f9;border:1px solid #ececec;box-sizing:border-box"></div>
<div class="tab" style="left:11.70px;width:110.50px"></div>
<div class="t" style="left:19.80px;top:58.04px;font-size:14.6px;line-height:14.6px;color:#000;transform:scaleX(1.0401);">О программе</div>
<div class="tab" style="left:121.20px;width:64.60px"></div>
<div class="t" style="left:130.25px;top:58.04px;font-size:14.6px;line-height:14.6px;color:#000;transform:scaleX(1.0061);">Общие</div>
<div class="tab" style="left:352.30px;width:58.70px"></div>
<div class="t" style="left:359.50px;top:58.04px;font-size:14.6px;line-height:14.6px;color:#000;transform:scaleX(1.0265);">Цвета</div>
<div class="tab" style="left:410.00px;width:69.00px"></div>
<div class="t" style="left:419.25px;top:58.04px;font-size:14.6px;line-height:14.6px;color:#000;transform:scaleX(1.0393);">Уровни</div>
<div class="tab" style="left:478.00px;width:114.20px"></div>
<div class="t" style="left:487.50px;top:58.04px;font-size:14.6px;line-height:14.6px;color:#000;transform:scaleX(1.0396);">Отображение</div>
<div class="a" style="left:184.80px;top:49.90px;width:168.00px;height:28.20px;background:#f9f9f9;border:1px solid #ececec;border-bottom:none;box-sizing:border-box"></div>
<div class="t" style="left:196.25px;top:55.54px;font-size:14.6px;line-height:14.6px;color:#000;transform:scaleX(1.0486);">Входные параметры</div>
<div class="a" style="left:19.30px;top:85.50px;width:884.70px;height:452.10px;background:#fff;border:1px solid #a2a6ae;border-left-color:#c6c6c8;border-bottom-color:#c6c6c8;border-right-color:#a6adba;box-sizing:border-box"></div>
<div class="a" style="left:878.60px;top:86.50px;width:24.40px;height:450.10px;background:#efefef"></div>
<div class="a" style="left:889.10px;top:250.30px;width:3.70px;height:262.00px;background:#878787;border-radius:1.85px"></div>
<div class="t" style="left:25.30px;top:91.80px;font-size:13.7px;line-height:13.7px;color:#000;transform:scaleX(1.1050);">Переменная</div>
<div class="t" style="left:454.20px;top:91.80px;font-size:13.7px;line-height:13.7px;color:#000;transform:scaleX(1.1127);">Значение</div>
<div class="row" style="top:110.30px;background:#ffffff"></div>
<div class="row" style="top:137.93px;background:#ebebeb"></div>
<div class="row" style="top:165.56px;background:#ffffff"></div>
<div class="row" style="top:193.19px;background:#ebebeb"></div>
<div class="row" style="top:220.82px;background:#ffffff"></div>
<div class="row" style="top:248.45px;background:#ebebeb"></div>
<div class="row" style="top:276.08px;background:#ffffff"></div>
<div class="row" style="top:303.71px;background:#ebebeb"></div>
<div class="row" style="top:331.34px;background:#ffffff"></div>
<div class="row" style="top:358.97px;background:#ebebeb"></div>
<div class="row" style="top:386.60px;background:#ffffff"></div>
<div class="row" style="top:414.23px;background:#ebebeb"></div>
<div class="row" style="top:441.86px;background:#ffffff"></div>
<div class="row" style="top:469.49px;background:#ebebeb"></div>
<div class="row" style="top:497.12px;background:#ffffff"></div>
<svg class="a" style="left:22.50px;top:112.40px" width="23.5" height="23.8" viewBox="0 0 23.5 23.8"><defs><linearGradient id="gg205" x1="0" y1="0" x2="1" y2="1"><stop offset="0" stop-color="#aaf3b2"/><stop offset="1" stop-color="#86e392"/></linearGradient></defs><path d="M0.6 2.6 Q0.6 0.6 2.6 0.6 L17 0.6 L22.9 6.5 L22.9 21.6 L21.4 23 L20 22 L18.8 23.4 L17.2 21.4 L15.6 19.6 L14 20.7 L12.4 19.6 L10.8 20.7 L9.2 19.6 L7.6 20.7 L6 19.9 L4.6 21.1 L3.2 20.5 L1.8 21.5 L0.6 21 Z" fill="url(#gg205)" stroke="#66d274" stroke-width="1.2"/><path d="M19 6.5 L22.9 6.5 L22.9 21.6 L21.4 23 L20 22 L19 23 Z" fill="#72d77e" opacity=".75"/><path d="M17 0.6 L17 6.5 L22.9 6.5 Z" fill="#72d77e" stroke="#66d274" stroke-width=".8"/><path d="M4.4 14.3 L11.0 8.6" stroke="#0f8c18" stroke-width="1.9" stroke-linecap="round"/><path d="M13.8 13.7 L18.3 13.9" stroke="#1a9a22" stroke-width="1.6" stroke-linecap="round"/></svg>
<div class="t" style="left:50.80px;top:116.30px;font-size:15px;line-height:15px;color:#000;">IgnoreLightSeaGreen</div>
<div class="t" style="left:453.90px;top:116.30px;font-size:15px;line-height:15px;color:#000;">false</div>
<svg class="a" style="left:22.50px;top:140.03px" width="23.5" height="23.8" viewBox="0 0 23.5 23.8"><defs><linearGradient id="gg232" x1="0" y1="0" x2="1" y2="1"><stop offset="0" stop-color="#aaf3b2"/><stop offset="1" stop-color="#86e392"/></linearGradient></defs><path d="M0.6 2.6 Q0.6 0.6 2.6 0.6 L17 0.6 L22.9 6.5 L22.9 21.6 L21.4 23 L20 22 L18.8 23.4 L17.2 21.4 L15.6 19.6 L14 20.7 L12.4 19.6 L10.8 20.7 L9.2 19.6 L7.6 20.7 L6 19.9 L4.6 21.1 L3.2 20.5 L1.8 21.5 L0.6 21 Z" fill="url(#gg232)" stroke="#66d274" stroke-width="1.2"/><path d="M19 6.5 L22.9 6.5 L22.9 21.6 L21.4 23 L20 22 L19 23 Z" fill="#72d77e" opacity=".75"/><path d="M17 0.6 L17 6.5 L22.9 6.5 Z" fill="#72d77e" stroke="#66d274" stroke-width=".8"/><path d="M4.4 14.3 L11.0 8.6" stroke="#0f8c18" stroke-width="1.9" stroke-linecap="round"/><path d="M13.8 13.7 L18.3 13.9" stroke="#1a9a22" stroke-width="1.6" stroke-linecap="round"/></svg>
<div class="t" style="left:50.80px;top:143.93px;font-size:15px;line-height:15px;color:#000;">IgnoreWhite</div>
<div class="t" style="left:453.90px;top:143.93px;font-size:15px;line-height:15px;color:#000;">false</div>
<svg class="a" style="left:22.50px;top:167.66px" width="23.5" height="23.8" viewBox="0 0 23.5 23.8"><defs><linearGradient id="gg260" x1="0" y1="0" x2="1" y2="1"><stop offset="0" stop-color="#aaf3b2"/><stop offset="1" stop-color="#86e392"/></linearGradient></defs><path d="M0.6 2.6 Q0.6 0.6 2.6 0.6 L17 0.6 L22.9 6.5 L22.9 21.6 L21.4 23 L20 22 L18.8 23.4 L17.2 21.4 L15.6 19.6 L14 20.7 L12.4 19.6 L10.8 20.7 L9.2 19.6 L7.6 20.7 L6 19.9 L4.6 21.1 L3.2 20.5 L1.8 21.5 L0.6 21 Z" fill="url(#gg260)" stroke="#66d274" stroke-width="1.2"/><path d="M19 6.5 L22.9 6.5 L22.9 21.6 L21.4 23 L20 22 L19 23 Z" fill="#72d77e" opacity=".75"/><path d="M17 0.6 L17 6.5 L22.9 6.5 Z" fill="#72d77e" stroke="#66d274" stroke-width=".8"/><path d="M4.4 14.3 L11.0 8.6" stroke="#0f8c18" stroke-width="1.9" stroke-linecap="round"/><path d="M13.8 13.7 L18.3 13.9" stroke="#1a9a22" stroke-width="1.6" stroke-linecap="round"/></svg>
<div class="t" style="left:50.80px;top:171.56px;font-size:15px;line-height:15px;color:#000;">IgnoreFireBrick</div>
<div class="t" style="left:453.90px;top:171.56px;font-size:15px;line-height:15px;color:#000;">false</div>
<svg class="a" style="left:22.50px;top:195.29px" width="23.5" height="23.8" viewBox="0 0 23.5 23.8"><defs><linearGradient id="gg287" x1="0" y1="0" x2="1" y2="1"><stop offset="0" stop-color="#aaf3b2"/><stop offset="1" stop-color="#86e392"/></linearGradient></defs><path d="M0.6 2.6 Q0.6 0.6 2.6 0.6 L17 0.6 L22.9 6.5 L22.9 21.6 L21.4 23 L20 22 L18.8 23.4 L17.2 21.4 L15.6 19.6 L14 20.7 L12.4 19.6 L10.8 20.7 L9.2 19.6 L7.6 20.7 L6 19.9 L4.6 21.1 L3.2 20.5 L1.8 21.5 L0.6 21 Z" fill="url(#gg287)" stroke="#66d274" stroke-width="1.2"/><path d="M19 6.5 L22.9 6.5 L22.9 21.6 L21.4 23 L20 22 L19 23 Z" fill="#72d77e" opacity=".75"/><path d="M17 0.6 L17 6.5 L22.9 6.5 Z" fill="#72d77e" stroke="#66d274" stroke-width=".8"/><path d="M4.4 14.3 L11.0 8.6" stroke="#0f8c18" stroke-width="1.9" stroke-linecap="round"/><path d="M13.8 13.7 L18.3 13.9" stroke="#1a9a22" stroke-width="1.6" stroke-linecap="round"/></svg>
<div class="t" style="left:50.80px;top:199.19px;font-size:15px;line-height:15px;color:#000;">IgnoreDodgerBlue</div>
<div class="t" style="left:453.90px;top:199.19px;font-size:15px;line-height:15px;color:#000;">false</div>
<svg class="a" style="left:22.50px;top:222.92px" width="23.5" height="23.8" viewBox="0 0 23.5 23.8"><defs><linearGradient id="gg315" x1="0" y1="0" x2="1" y2="1"><stop offset="0" stop-color="#aaf3b2"/><stop offset="1" stop-color="#86e392"/></linearGradient></defs><path d="M0.6 2.6 Q0.6 0.6 2.6 0.6 L17 0.6 L22.9 6.5 L22.9 21.6 L21.4 23 L20 22 L18.8 23.4 L17.2 21.4 L15.6 19.6 L14 20.7 L12.4 19.6 L10.8 20.7 L9.2 19.6 L7.6 20.7 L6 19.9 L4.6 21.1 L3.2 20.5 L1.8 21.5 L0.6 21 Z" fill="url(#gg315)" stroke="#66d274" stroke-width="1.2"/><path d="M19 6.5 L22.9 6.5 L22.9 21.6 L21.4 23 L20 22 L19 23 Z" fill="#72d77e" opacity=".75"/><path d="M17 0.6 L17 6.5 L22.9 6.5 Z" fill="#72d77e" stroke="#66d274" stroke-width=".8"/><path d="M4.4 14.3 L11.0 8.6" stroke="#0f8c18" stroke-width="1.9" stroke-linecap="round"/><path d="M13.8 13.7 L18.3 13.9" stroke="#1a9a22" stroke-width="1.6" stroke-linecap="round"/></svg>
<div class="t" style="left:50.80px;top:226.82px;font-size:15px;line-height:15px;color:#000;">IgnoreLightSalmon</div>
<div class="t" style="left:453.90px;top:226.82px;font-size:15px;line-height:15px;color:#000;">false</div>
<svg class="a" style="left:22.50px;top:250.55px" width="23.5" height="23.8" viewBox="0 0 23.5 23.8"><defs><linearGradient id="gg343" x1="0" y1="0" x2="1" y2="1"><stop offset="0" stop-color="#aaf3b2"/><stop offset="1" stop-color="#86e392"/></linearGradient></defs><path d="M0.6 2.6 Q0.6 0.6 2.6 0.6 L17 0.6 L22.9 6.5 L22.9 21.6 L21.4 23 L20 22 L18.8 23.4 L17.2 21.4 L15.6 19.6 L14 20.7 L12.4 19.6 L10.8 20.7 L9.2 19.6 L7.6 20.7 L6 19.9 L4.6 21.1 L3.2 20.5 L1.8 21.5 L0.6 21 Z" fill="url(#gg343)" stroke="#66d274" stroke-width="1.2"/><path d="M19 6.5 L22.9 6.5 L22.9 21.6 L21.4 23 L20 22 L19 23 Z" fill="#72d77e" opacity=".75"/><path d="M17 0.6 L17 6.5 L22.9 6.5 Z" fill="#72d77e" stroke="#66d274" stroke-width=".8"/><path d="M4.4 14.3 L11.0 8.6" stroke="#0f8c18" stroke-width="1.9" stroke-linecap="round"/><path d="M13.8 13.7 L18.3 13.9" stroke="#1a9a22" stroke-width="1.6" stroke-linecap="round"/></svg>
<div class="t" style="left:50.80px;top:254.45px;font-size:15px;line-height:15px;color:#000;">IgnoreMagenta</div>
<div class="t" style="left:453.90px;top:254.45px;font-size:15px;line-height:15px;color:#000;">false</div>
<svg class="a" style="left:22.50px;top:278.18px" width="23.5" height="23.8" viewBox="0 0 23.5 23.8"><defs><linearGradient id="gy370" x1="0" y1="0" x2="1" y2="1"><stop offset="0" stop-color="#eee797"/><stop offset="1" stop-color="#e1d87e"/></linearGradient></defs><path d="M0.6 2.6 Q0.6 0.6 2.6 0.6 L17 0.6 L22.9 6.5 L22.9 21.6 L21.4 23 L20 22 L18.8 23.4 L17.2 21.4 L15.6 19.6 L14 20.7 L12.4 19.6 L10.8 20.7 L9.2 19.6 L7.6 20.7 L6 19.9 L4.6 21.1 L3.2 20.5 L1.8 21.5 L0.6 21 Z" fill="url(#gy370)" stroke="#cfc262" stroke-width="1.2"/><path d="M19 6.5 L22.9 6.5 L22.9 21.6 L21.4 23 L20 22 L19 23 Z" fill="#d5ca6c" opacity=".75"/><path d="M17 0.6 L17 6.5 L22.9 6.5 Z" fill="#d5ca6c" stroke="#cfc262" stroke-width=".8"/><text x="3.0" y="15.4" font-family="Liberation Sans, sans-serif" font-size="13.2" fill="#5e5e00" stroke="#5e5e00" stroke-width=".3" textLength="12.8" lengthAdjust="spacingAndGlyphs">ab</text></svg>
<div class="t" style="left:50.80px;top:282.08px;font-size:15px;line-height:15px;color:#000;">ahi2</div>
<div class="t" style="left:453.90px;top:282.08px;font-size:15px;line-height:15px;color:#000;">******* ALERTs on MOVING AVERAGE CROSS?</div>
<svg class="a" style="left:22.50px;top:305.81px" width="23.5" height="23.8" viewBox="0 0 23.5 23.8"><defs><linearGradient id="gg398" x1="0" y1="0" x2="1" y2="1"><stop offset="0" stop-color="#aaf3b2"/><stop offset="1" stop-color="#86e392"/></linearGradient></defs><path d="M0.6 2.6 Q0.6 0.6 2.6 0.6 L17 0.6 L22.9 6.5 L22.9 21.6 L21.4 23 L20 22 L18.8 23.4 L17.2 21.4 L15.6 19.6 L14 20.7 L12.4 19.6 L10.8 20.7 L9.2 19.6 L7.6 20.7 L6 19.9 L4.6 21.1 L3.2 20.5 L1.8 21.5 L0.6 21 Z" fill="url(#gg398)" stroke="#66d274" stroke-width="1.2"/><path d="M19 6.5 L22.9 6.5 L22.9 21.6 L21.4 23 L20 22 L19 23 Z" fill="#72d77e" opacity=".75"/><path d="M17 0.6 L17 6.5 L22.9 6.5 Z" fill="#72d77e" stroke="#66d274" stroke-width=".8"/><path d="M4.4 14.3 L11.0 8.6" stroke="#0f8c18" stroke-width="1.9" stroke-linecap="round"/><path d="M13.8 13.7 L18.3 13.9" stroke="#1a9a22" stroke-width="1.6" stroke-linecap="round"/></svg>
<div class="t" style="left:50.80px;top:309.71px;font-size:15px;line-height:15px;color:#000;">AlertOnMAcross</div>
<div class="t" style="left:453.90px;top:309.71px;font-size:15px;line-height:15px;color:#000;">false</div>
<svg class="a" style="left:22.50px;top:333.44px" width="23.5" height="23.8" viewBox="0 0 23.5 23.8"><defs><linearGradient id="gy426" x1="0" y1="0" x2="1" y2="1"><stop offset="0" stop-color="#eee797"/><stop offset="1" stop-color="#e1d87e"/></linearGradient></defs><path d="M0.6 2.6 Q0.6 0.6 2.6 0.6 L17 0.6 L22.9 6.5 L22.9 21.6 L21.4 23 L20 22 L18.8 23.4 L17.2 21.4 L15.6 19.6 L14 20.7 L12.4 19.6 L10.8 20.7 L9.2 19.6 L7.6 20.7 L6 19.9 L4.6 21.1 L3.2 20.5 L1.8 21.5 L0.6 21 Z" fill="url(#gy426)" stroke="#cfc262" stroke-width="1.2"/><path d="M19 6.5 L22.9 6.5 L22.9 21.6 L21.4 23 L20 22 L19 23 Z" fill="#d5ca6c" opacity=".75"/><path d="M17 0.6 L17 6.5 L22.9 6.5 Z" fill="#d5ca6c" stroke="#cfc262" stroke-width=".8"/><text x="3.0" y="15.4" font-family="Liberation Sans, sans-serif" font-size="13.2" fill="#5e5e00" stroke="#5e5e00" stroke-width=".3" textLength="12.8" lengthAdjust="spacingAndGlyphs">ab</text></svg>
<div class="t" style="left:50.80px;top:337.34px;font-size:15px;line-height:15px;color:#000;">ahi3</div>
<div class="t" style="left:453.90px;top:337.34px;font-size:15px;line-height:15px;color:#000;">-----: alert methods:</div>
<svg class="a" style="left:22.50px;top:361.07px" width="23.5" height="23.8" viewBox="0 0 23.5 23.8"><defs><linearGradient id="gb453" x1="0" y1="0" x2="1" y2="1"><stop offset="0" stop-color="#b2d6f3"/><stop offset="1" stop-color="#98c5ed"/></linearGradient></defs><path d="M0.6 2.6 Q0.6 0.6 2.6 0.6 L17 0.6 L22.9 6.5 L22.9 21.6 L21.4 23 L20 22 L18.8 23.4 L17.2 21.4 L15.6 19.6 L14 20.7 L12.4 19.6 L10.8 20.7 L9.2 19.6 L7.6 20.7 L6 19.9 L4.6 21.1 L3.2 20.5 L1.8 21.5 L0.6 21 Z" fill="url(#gb453)" stroke="#78ade2" stroke-width="1.2"/><path d="M19 6.5 L22.9 6.5 L22.9 21.6 L21.4 23 L20 22 L19 23 Z" fill="#82b5e7" opacity=".75"/><path d="M17 0.6 L17 6.5 L22.9 6.5 Z" fill="#82b5e7" stroke="#78ade2" stroke-width=".8"/><text x="2.6" y="16.5" font-family="Liberation Sans, sans-serif" font-weight="bold" font-size="10.4" fill="#12305e" stroke="#12305e" stroke-width=".25" textLength="14.8" lengthAdjust="spacingAndGlyphs">123</text></svg>
<div class="t" style="left:50.80px;top:364.97px;font-size:15px;line-height:15px;color:#000;">AlertCandleShift</div>
<div class="t" style="left:453.90px;top:364.97px;font-size:15px;line-height:15px;color:#000;">0</div>
<svg class="a" style="left:22.50px;top:388.70px" width="23.5" height="23.8" viewBox="0 0 23.5 23.8"><defs><linearGradient id="gg481" x1="0" y1="0" x2="1" y2="1"><stop offset="0" stop-color="#aaf3b2"/><stop offset="1" stop-color="#86e392"/></linearGradient></defs><path d="M0.6 2.6 Q0.6 0.6 2.6 0.6 L17 0.6 L22.9 6.5 L22.9 21.6 L21.4 23 L20 22 L18.8 23.4 L17.2 21.4 L15.6 19.6 L14 20.7 L12.4 19.6 L10.8 20.7 L9.2 19.6 L7.6 20.7 L6 19.9 L4.6 21.1 L3.2 20.5 L1.8 21.5 L0.6 21 Z" fill="url(#gg481)" stroke="#66d274" stroke-width="1.2"/><path d="M19 6.5 L22.9 6.5 L22.9 21.6 L21.4 23 L20 22 L19 23 Z" fill="#72d77e" opacity=".75"/><path d="M17 0.6 L17 6.5 L22.9 6.5 Z" fill="#72d77e" stroke="#66d274" stroke-width=".8"/><path d="M4.4 14.3 L11.0 8.6" stroke="#0f8c18" stroke-width="1.9" stroke-linecap="round"/><path d="M13.8 13.7 L18.3 13.9" stroke="#1a9a22" stroke-width="1.6" stroke-linecap="round"/></svg>
<div class="t" style="left:50.80px;top:392.60px;font-size:15px;line-height:15px;color:#000;">PopupAlerts</div>
<div class="t" style="left:453.90px;top:392.60px;font-size:15px;line-height:15px;color:#000;">true</div>
<svg class="a" style="left:22.50px;top:416.33px" width="23.5" height="23.8" viewBox="0 0 23.5 23.8"><defs><linearGradient id="gg509" x1="0" y1="0" x2="1" y2="1"><stop offset="0" stop-color="#aaf3b2"/><stop offset="1" stop-color="#86e392"/></linearGradient></defs><path d="M0.6 2.6 Q0.6 0.6 2.6 0.6 L17 0.6 L22.9 6.5 L22.9 21.6 L21.4 23 L20 22 L18.8 23.4 L17.2 21.4 L15.6 19.6 L14 20.7 L12.4 19.6 L10.8 20.7 L9.2 19.6 L7.6 20.7 L6 19.9 L4.6 21.1 L3.2 20.5 L1.8 21.5 L0.6 21 Z" fill="url(#gg509)" stroke="#66d274" stroke-width="1.2"/><path d="M19 6.5 L22.9 6.5 L22.9 21.6 L21.4 23 L20 22 L19 23 Z" fill="#72d77e" opacity=".75"/><path d="M17 0.6 L17 6.5 L22.9 6.5 Z" fill="#72d77e" stroke="#66d274" stroke-width=".8"/><path d="M4.4 14.3 L11.0 8.6" stroke="#0f8c18" stroke-width="1.9" stroke-linecap="round"/><path d="M13.8 13.7 L18.3 13.9" stroke="#1a9a22" stroke-width="1.6" stroke-linecap="round"/></svg>
<div class="t" style="left:50.80px;top:420.23px;font-size:15px;line-height:15px;color:#000;">EmailAlerts</div>
<div class="t" style="left:453.90px;top:420.23px;font-size:15px;line-height:15px;color:#000;">false</div>
<svg class="a" style="left:22.50px;top:443.96px" width="23.5" height="23.8" viewBox="0 0 23.5 23.8"><defs><linearGradient id="gg536" x1="0" y1="0" x2="1" y2="1"><stop offset="0" stop-color="#aaf3b2"/><stop offset="1" stop-color="#86e392"/></linearGradient></defs><path d="M0.6 2.6 Q0.6 0.6 2.6 0.6 L17 0.6 L22.9 6.5 L22.9 21.6 L21.4 23 L20 22 L18.8 23.4 L17.2 21.4 L15.6 19.6 L14 20.7 L12.4 19.6 L10.8 20.7 L9.2 19.6 L7.6 20.7 L6 19.9 L4.6 21.1 L3.2 20.5 L1.8 21.5 L0.6 21 Z" fill="url(#gg536)" stroke="#66d274" stroke-width="1.2"/><path d="M19 6.5 L22.9 6.5 L22.9 21.6 L21.4 23 L20 22 L19 23 Z" fill="#72d77e" opacity=".75"/><path d="M17 0.6 L17 6.5 L22.9 6.5 Z" fill="#72d77e" stroke="#66d274" stroke-width=".8"/><path d="M4.4 14.3 L11.0 8.6" stroke="#0f8c18" stroke-width="1.9" stroke-linecap="round"/><path d="M13.8 13.7 L18.3 13.9" stroke="#1a9a22" stroke-width="1.6" stroke-linecap="round"/></svg>
<div class="t" style="left:50.80px;top:447.86px;font-size:15px;line-height:15px;color:#000;">PushNotificationAlerts</div>
<div class="t" style="left:453.90px;top:447.86px;font-size:15px;line-height:15px;color:#000;">false</div>
<svg class="a" style="left:22.50px;top:471.59px" width="23.5" height="23.8" viewBox="0 0 23.5 23.8"><defs><linearGradient id="gg564" x1="0" y1="0" x2="1" y2="1"><stop offset="0" stop-color="#aaf3b2"/><stop offset="1" stop-color="#86e392"/></linearGradient></defs><path d="M0.6 2.6 Q0.6 0.6 2.6 0.6 L17 0.6 L22.9 6.5 L22.9 21.6 L21.4 23 L20 22 L18.8 23.4 L17.2 21.4 L15.6 19.6 L14 20.7 L12.4 19.6 L10.8 20.7 L9.2 19.6 L7.6 20.7 L6 19.9 L4.6 21.1 L3.2 20.5 L1.8 21.5 L0.6 21 Z" fill="url(#gg564)" stroke="#66d274" stroke-width="1.2"/><path d="M19 6.5 L22.9 6.5 L22.9 21.6 L21.4 23 L20 22 L19 23 Z" fill="#72d77e" opacity=".75"/><path d="M17 0.6 L17 6.5 L22.9 6.5 Z" fill="#72d77e" stroke="#66d274" stroke-width=".8"/><path d="M4.4 14.3 L11.0 8.6" stroke="#0f8c18" stroke-width="1.9" stroke-linecap="round"/><path d="M13.8 13.7 L18.3 13.9" stroke="#1a9a22" stroke-width="1.6" stroke-linecap="round"/></svg>
<div class="t" style="left:50.80px;top:475.49px;font-size:15px;line-height:15px;color:#000;">SoundAlerts</div>
<div class="t" style="left:453.90px;top:475.49px;font-size:15px;line-height:15px;color:#000;">false</div>
<svg class="a" style="left:22.50px;top:499.22px" width="23.5" height="23.8" viewBox="0 0 23.5 23.8"><defs><linearGradient id="gy591" x1="0" y1="0" x2="1" y2="1"><stop offset="0" stop-color="#eee797"/><stop offset="1" stop-color="#e1d87e"/></linearGradient></defs><path d="M0.6 2.6 Q0.6 0.6 2.6 0.6 L17 0.6 L22.9 6.5 L22.9 21.6 L21.4 23 L20 22 L18.8 23.4 L17.2 21.4 L15.6 19.6 L14 20.7 L12.4 19.6 L10.8 20.7 L9.2 19.6 L7.6 20.7 L6 19.9 L4.6 21.1 L3.2 20.5 L1.8 21.5 L0.6 21 Z" fill="url(#gy591)" stroke="#cfc262" stroke-width="1.2"/><path d="M19 6.5 L22.9 6.5 L22.9 21.6 L21.4 23 L20 22 L19 23 Z" fill="#d5ca6c" opacity=".75"/><path d="M17 0.6 L17 6.5 L22.9 6.5 Z" fill="#d5ca6c" stroke="#cfc262" stroke-width=".8"/><text x="3.0" y="15.4" font-family="Liberation Sans, sans-serif" font-size="13.2" fill="#5e5e00" stroke="#5e5e00" stroke-width=".3" textLength="12.8" lengthAdjust="spacingAndGlyphs">ab</text></svg>
<div class="t" style="left:50.80px;top:503.12px;font-size:15px;line-height:15px;color:#000;">SoundFile</div>
<div class="t" style="left:453.90px;top:503.12px;font-size:15px;line-height:15px;color:#000;">alert.wav</div>
<div class="a" style="left:449.20px;top:86.50px;width:1.00px;height:438.00px;background:#dcdcdc"></div>
<div class="btn" style="left:915.30px;top:461.10px;width:147.50px;height:29.20px;"></div><div class="t" style="left:954.00px;top:468.24px;font-size:14.6px;line-height:14.6px;color:#000;transform:scaleX(1.0576);">Загрузить</div>
<div class="btn" style="left:915.30px;top:505.50px;width:147.50px;height:29.30px;"></div><div class="t" style="left:951.00px;top:512.94px;font-size:14.6px;line-height:14.6px;color:#000;transform:scaleX(1.0406);">Сохранить</div>
<div class="btn" style="left:736.50px;top:557.80px;width:104.30px;height:29.10px;border-color:#0f7ad6;border-width:1.3px;"></div><div class="t" style="left:778.25px;top:564.94px;font-size:14.6px;line-height:14.6px;color:#000;transform:scaleX(0.9600);">OK</div>
<div class="btn" style="left:851.50px;top:557.80px;width:104.30px;height:29.10px;"></div><div class="t" style="left:876.00px;top:564.94px;font-size:14.6px;line-height:14.6px;color:#000;transform:scaleX(1.0261);">Отмена</div>
<div class="btn" style="left:965.80px;top:557.80px;width:104.50px;height:29.10px;"></div><div class="t" style="left:996.50px;top:564.94px;font-size:14.6px;line-height:14.6px;color:#000;transform:scaleX(1.0307);">Сброс</div>
</div>
</body></html>
